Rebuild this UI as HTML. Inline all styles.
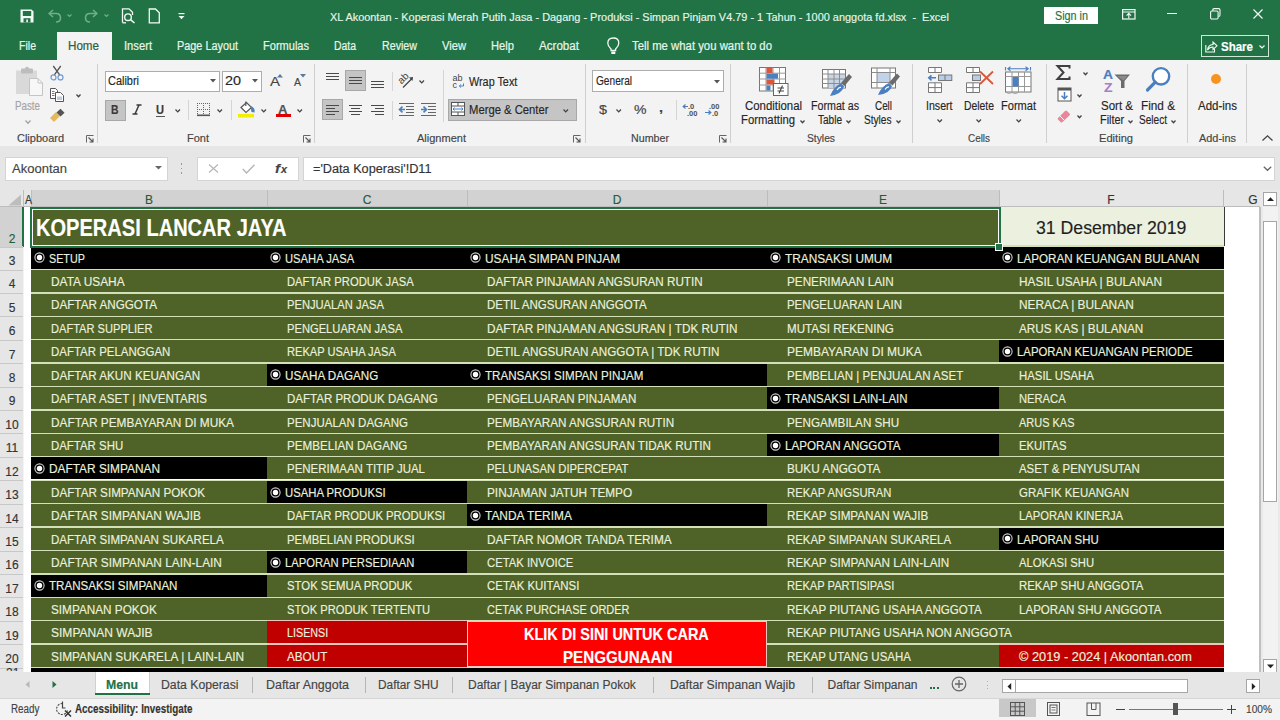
<!DOCTYPE html>
<html><head><meta charset="utf-8"><style>
html,body{margin:0;padding:0;width:1280px;height:720px;overflow:hidden;background:#f3f3f3;font-family:"Liberation Sans", sans-serif;}
.t{position:absolute;white-space:nowrap;-webkit-text-stroke-width:0.15px;}
svg{overflow:visible}
</style></head><body>
<div style="position:absolute;left:0px;top:0px;width:1280px;height:60px;background:#217346;"></div>
<div class="t" style="left:330.00px;top:12.00px;font-size:11px;line-height:11px;color:#e6f6ea;transform:scaleX(0.9932);transform-origin:0 0;white-space:pre;-webkit-text-stroke:0.15px #e6f6ea;">XL Akoontan - Koperasi Merah Putih Jasa - Dagang - Produksi - Simpan Pinjam V4.79 - 1 Tahun - 1000 anggota fd.xlsx  -  Excel</div>
<div style="position:absolute;left:1044px;top:7px;width:54px;height:17px;background:#ffffff;"></div>
<div class="t" style="left:1054.50px;top:10.00px;font-size:12px;line-height:12px;color:#217346;transform:scaleX(0.8994);transform-origin:0 0;">Sign in</div>
<div style="position:absolute;left:57px;top:32px;width:55px;height:28px;background:#f3f3f3;"></div>
<div class="t" style="left:19.00px;top:40.00px;font-size:12px;line-height:12px;color:#e6f6ea;transform:scaleX(0.8792);transform-origin:0 0;-webkit-text-stroke:0.2px #e6f6ea;">File</div>
<div class="t" style="left:68.00px;top:40.00px;font-size:12px;line-height:12px;color:#2e5e40;transform:scaleX(0.9685);transform-origin:0 0;-webkit-text-stroke:0.2px #2e5e40;">Home</div>
<div class="t" style="left:124.00px;top:40.00px;font-size:12px;line-height:12px;color:#e6f6ea;transform:scaleX(0.9330);transform-origin:0 0;-webkit-text-stroke:0.2px #e6f6ea;">Insert</div>
<div class="t" style="left:177.00px;top:40.00px;font-size:12px;line-height:12px;color:#e6f6ea;transform:scaleX(0.9052);transform-origin:0 0;-webkit-text-stroke:0.2px #e6f6ea;">Page Layout</div>
<div class="t" style="left:263.00px;top:40.00px;font-size:12px;line-height:12px;color:#e6f6ea;transform:scaleX(0.9198);transform-origin:0 0;-webkit-text-stroke:0.2px #e6f6ea;">Formulas</div>
<div class="t" style="left:334.00px;top:40.00px;font-size:12px;line-height:12px;color:#e6f6ea;transform:scaleX(0.8679);transform-origin:0 0;-webkit-text-stroke:0.2px #e6f6ea;">Data</div>
<div class="t" style="left:382.00px;top:40.00px;font-size:12px;line-height:12px;color:#e6f6ea;transform:scaleX(0.8896);transform-origin:0 0;-webkit-text-stroke:0.2px #e6f6ea;">Review</div>
<div class="t" style="left:442.00px;top:40.00px;font-size:12px;line-height:12px;color:#e6f6ea;transform:scaleX(0.9305);transform-origin:0 0;-webkit-text-stroke:0.2px #e6f6ea;">View</div>
<div class="t" style="left:491.00px;top:40.00px;font-size:12px;line-height:12px;color:#e6f6ea;transform:scaleX(0.9319);transform-origin:0 0;-webkit-text-stroke:0.2px #e6f6ea;">Help</div>
<div class="t" style="left:539.00px;top:40.00px;font-size:12px;line-height:12px;color:#e6f6ea;transform:scaleX(0.9672);transform-origin:0 0;-webkit-text-stroke:0.2px #e6f6ea;">Acrobat</div>
<div class="t" style="left:632.00px;top:40.00px;font-size:12px;line-height:12px;color:#e6f6ea;transform:scaleX(0.9454);transform-origin:0 0;-webkit-text-stroke:0.2px #e6f6ea;">Tell me what you want to do</div>
<div style="position:absolute;left:1201px;top:35px;width:66px;height:20px;border:1px solid #d0e8d8;"></div>
<div class="t" style="left:1221.00px;top:41.00px;font-size:12px;line-height:12px;color:#ffffff;font-weight:bold;transform:scaleX(0.9595);transform-origin:0 0;">Share</div>
<div style="position:absolute;left:0px;top:60px;width:1280px;height:86px;background:#f3f3f3;"></div>
<div style="position:absolute;left:0px;top:146px;width:1280px;height:46px;background:#e6e6e6;"></div>
<div style="position:absolute;left:97px;top:64px;width:1px;height:79px;background:#cfcfcf;"></div>
<div style="position:absolute;left:314px;top:64px;width:1px;height:79px;background:#cfcfcf;"></div>
<div style="position:absolute;left:585px;top:64px;width:1px;height:79px;background:#cfcfcf;"></div>
<div style="position:absolute;left:730px;top:64px;width:1px;height:79px;background:#cfcfcf;"></div>
<div style="position:absolute;left:912px;top:64px;width:1px;height:79px;background:#cfcfcf;"></div>
<div style="position:absolute;left:1046px;top:64px;width:1px;height:79px;background:#cfcfcf;"></div>
<div style="position:absolute;left:1187px;top:64px;width:1px;height:79px;background:#cfcfcf;"></div>
<div style="position:absolute;left:1246px;top:64px;width:1px;height:79px;background:#cfcfcf;"></div>
<div class="t" style="left:17.00px;top:134.00px;font-size:10px;line-height:10px;color:#444444;transform:scaleX(1.0981);transform-origin:0 0;">Clipboard</div>
<div class="t" style="left:187.00px;top:134.00px;font-size:10px;line-height:10px;color:#444444;transform:scaleX(1.0995);transform-origin:0 0;">Font</div>
<div class="t" style="left:417.00px;top:134.00px;font-size:10px;line-height:10px;color:#444444;transform:scaleX(1.1019);transform-origin:0 0;">Alignment</div>
<div class="t" style="left:631.00px;top:134.00px;font-size:10px;line-height:10px;color:#444444;transform:scaleX(1.0684);transform-origin:0 0;">Number</div>
<div class="t" style="left:807.00px;top:134.00px;font-size:10px;line-height:10px;color:#444444;transform:scaleX(1.0282);transform-origin:0 0;">Styles</div>
<div class="t" style="left:968.00px;top:134.00px;font-size:10px;line-height:10px;color:#444444;transform:scaleX(0.9898);transform-origin:0 0;">Cells</div>
<div class="t" style="left:1099.00px;top:134.00px;font-size:10px;line-height:10px;color:#444444;transform:scaleX(1.1120);transform-origin:0 0;">Editing</div>
<div class="t" style="left:1199.00px;top:134.00px;font-size:10px;line-height:10px;color:#444444;transform:scaleX(1.0912);transform-origin:0 0;">Add-ins</div>
<svg style="position:absolute;left:86px;top:135px" width="8" height="8" viewBox="0 0 8 8"><path d="M0.5,7.5 V0.5 H7.5" fill="none" stroke="#666" stroke-width="1"/><path d="M2.5,2.5 L7,7 M7,3.5 V7 H3.5" fill="none" stroke="#555" stroke-width="1.1"/></svg>
<svg style="position:absolute;left:303px;top:135px" width="8" height="8" viewBox="0 0 8 8"><path d="M0.5,7.5 V0.5 H7.5" fill="none" stroke="#666" stroke-width="1"/><path d="M2.5,2.5 L7,7 M7,3.5 V7 H3.5" fill="none" stroke="#555" stroke-width="1.1"/></svg>
<svg style="position:absolute;left:573px;top:135px" width="8" height="8" viewBox="0 0 8 8"><path d="M0.5,7.5 V0.5 H7.5" fill="none" stroke="#666" stroke-width="1"/><path d="M2.5,2.5 L7,7 M7,3.5 V7 H3.5" fill="none" stroke="#555" stroke-width="1.1"/></svg>
<svg style="position:absolute;left:719px;top:135px" width="8" height="8" viewBox="0 0 8 8"><path d="M0.5,7.5 V0.5 H7.5" fill="none" stroke="#666" stroke-width="1"/><path d="M2.5,2.5 L7,7 M7,3.5 V7 H3.5" fill="none" stroke="#555" stroke-width="1.1"/></svg>
<svg style="position:absolute;left:1262px;top:135px" width="11" height="6" viewBox="0 0 11 6"><polyline points="0.5,5.5 5.5,0.8 10.5,5.5" fill="none" stroke="#444" stroke-width="1.3"/></svg>
<svg style="position:absolute;left:14px;top:66px" width="30" height="31" viewBox="0 0 30 31">
<rect x="2" y="4.5" width="21" height="23.5" fill="#d9d9d9"/>
<rect x="7" y="2.5" width="12" height="5" rx="1" fill="#bdbdbd"/>
<circle cx="13" cy="2.8" r="2" fill="#bdbdbd"/>
<path d="M15.5,12.5 H24 L28.5,17 V29.5 H15.5 Z" fill="#f7f7f7" stroke="#c4c4c4" stroke-width="1"/>
<path d="M24,12.5 V17 H28.5" fill="none" stroke="#c4c4c4" stroke-width="1"/></svg>
<div class="t" style="left:14.90px;top:100.00px;font-size:12px;line-height:12px;color:#a3a3a3;transform:scaleX(0.8147);transform-origin:0 0;">Paste</div>
<svg style="position:absolute;left:24.5px;top:119.5px" width="6" height="3.5" viewBox="0 0 6 3.5"><polyline points="0.5,0.5 3.0,3.2 5.5,0.5" fill="none" stroke="#a3a3a3" stroke-width="1.3"/></svg>
<svg style="position:absolute;left:49px;top:65px" width="16" height="16" viewBox="0 0 16 16"><path d="M4.3,1 L10.8,10.2 M11.7,1 L5.2,10.2" stroke="#555" stroke-width="1.3" fill="none"/><circle cx="4.5" cy="12.4" r="2.5" fill="none" stroke="#6f9bd3" stroke-width="1.2"/><circle cx="11.5" cy="12.4" r="2.5" fill="none" stroke="#6f9bd3" stroke-width="1.2"/></svg>
<svg style="position:absolute;left:49px;top:87px" width="16" height="15" viewBox="0 0 16 15"><path d="M1.5,1.5 H6.5 L8.5,3.5 V11.5 H1.5 Z" fill="#fff" stroke="#555" stroke-width="1"/><path d="M3,4.5 H5.5 M3,6.5 H5.5 M3,8.5 H5.5" stroke="#666" stroke-width="0.9"/><path d="M6.5,5.5 H11.5 L14.5,8.5 V14.5 H6.5 Z" fill="#fff" stroke="#555" stroke-width="1"/><rect x="8" y="9.5" width="5" height="3.5" fill="#b9cde6"/></svg>
<svg style="position:absolute;left:76px;top:94px" width="5" height="3" viewBox="0 0 5 3"><polyline points="0.5,0.5 2.5,2.7 4.5,0.5" fill="none" stroke="#444" stroke-width="1.3"/></svg>
<svg style="position:absolute;left:49px;top:108px" width="17" height="15" viewBox="0 0 17 15">
<path d="M1,10 L7,4 L11,8 L5,14 Z" fill="#e6b85c"/>
<path d="M7.5,4.5 L11.5,0.8 L15.5,4.8 L11.5,8.5 Z" fill="#555"/></svg>
<div style="position:absolute;left:105px;top:70.5px;width:115px;height:21px;background:#ffffff;box-shadow:inset 0 0 0 1px #adadad;"></div>
<div class="t" style="left:108.00px;top:75.00px;font-size:12px;line-height:12px;color:#262626;transform:scaleX(0.9116);transform-origin:0 0;">Calibri</div>
<svg style="position:absolute;left:210px;top:79px" width="6" height="4" viewBox="0 0 6 4"><path d="M0,0 H6 L3,3.5 Z" fill="#555"/></svg>
<div style="position:absolute;left:222px;top:70.5px;width:40px;height:21px;background:#ffffff;box-shadow:inset 0 0 0 1px #adadad;"></div>
<div class="t" style="left:225.00px;top:75.00px;font-size:12px;line-height:12px;color:#262626;transform:scaleX(1.1987);transform-origin:0 0;">20</div>
<svg style="position:absolute;left:252px;top:79px" width="6" height="4" viewBox="0 0 6 4"><path d="M0,0 H6 L3,3.5 Z" fill="#555"/></svg>
<div class="t" style="left:270.00px;top:75.00px;font-size:13px;line-height:13px;color:#444444;transform:scaleX(1.1533);transform-origin:0 0;">A</div>
<svg style="position:absolute;left:277px;top:73.5px" width="6" height="4" viewBox="0 0 6 4"><path d="M0,3.5 H6 L3,0 Z" fill="#5a7a99"/></svg>
<div class="t" style="left:293.50px;top:78.00px;font-size:10px;line-height:10px;color:#444444;transform:scaleX(1.0495);transform-origin:0 0;">A</div>
<svg style="position:absolute;left:300px;top:73.5px" width="6" height="4" viewBox="0 0 6 4"><path d="M0,0 H6 L3,3.5 Z" fill="#5a7a99"/></svg>
<div style="position:absolute;left:105px;top:99.5px;width:21px;height:21px;background:#c5c5c5;box-shadow:inset 0 0 0 1px #a8a8a8;"></div>
<div class="t" style="left:111.00px;top:104.00px;font-size:12px;line-height:12px;color:#3a3a3a;font-weight:bold;transform:scaleX(0.8654);transform-origin:0 0;">B</div>
<svg style="position:absolute;left:132px;top:104px" width="10" height="11" viewBox="0 0 10 11"><path d="M4.5,1 H9.5 M0.5,10 H5.5 M7,1 L3,10" stroke="#3a3a3a" stroke-width="1.5" fill="none"/></svg>
<div class="t" style="left:156.00px;top:104.00px;font-size:12px;line-height:12px;color:#3a3a3a;font-weight:bold;transform:scaleX(0.9231);transform-origin:0 0;">U</div>
<div style="position:absolute;left:156px;top:115.5px;width:8.5px;height:1.2px;background:#555;"></div>
<svg style="position:absolute;left:174.5px;top:109px" width="5.5" height="3.2" viewBox="0 0 5.5 3.2"><polyline points="0.5,0.5 2.75,2.9000000000000004 5.0,0.5" fill="none" stroke="#444" stroke-width="1.3"/></svg>
<div style="position:absolute;left:188px;top:100px;width:1px;height:20px;background:#d5d5d5;"></div>
<svg style="position:absolute;left:197px;top:103px" width="14" height="14" viewBox="0 0 14 14"><rect x="0" y="0" width="1" height="1" fill="#666"/><rect x="6" y="0" width="1" height="1" fill="#666"/><rect x="12" y="0" width="1" height="1" fill="#666"/><rect x="0" y="2" width="1" height="1" fill="#666"/><rect x="6" y="2" width="1" height="1" fill="#666"/><rect x="12" y="2" width="1" height="1" fill="#666"/><rect x="0" y="4" width="1" height="1" fill="#666"/><rect x="6" y="4" width="1" height="1" fill="#666"/><rect x="12" y="4" width="1" height="1" fill="#666"/><rect x="0" y="6" width="1" height="1" fill="#666"/><rect x="6" y="6" width="1" height="1" fill="#666"/><rect x="12" y="6" width="1" height="1" fill="#666"/><rect x="0" y="8" width="1" height="1" fill="#666"/><rect x="6" y="8" width="1" height="1" fill="#666"/><rect x="12" y="8" width="1" height="1" fill="#666"/><rect x="0" y="10" width="1" height="1" fill="#666"/><rect x="6" y="10" width="1" height="1" fill="#666"/><rect x="12" y="10" width="1" height="1" fill="#666"/><rect x="2" y="0" width="1" height="1" fill="#666"/><rect x="4" y="0" width="1" height="1" fill="#666"/><rect x="8" y="0" width="1" height="1" fill="#666"/><rect x="10" y="0" width="1" height="1" fill="#666"/><rect x="2" y="6" width="1" height="1" fill="#666"/><rect x="4" y="6" width="1" height="1" fill="#666"/><rect x="8" y="6" width="1" height="1" fill="#666"/><rect x="10" y="6" width="1" height="1" fill="#666"/><rect x="0" y="11.5" width="13" height="1.6" fill="#555"/></svg>
<svg style="position:absolute;left:217px;top:109px" width="5.5" height="3.2" viewBox="0 0 5.5 3.2"><polyline points="0.5,0.5 2.75,2.9000000000000004 5.0,0.5" fill="none" stroke="#444" stroke-width="1.3"/></svg>
<div style="position:absolute;left:231px;top:100px;width:1px;height:20px;background:#d5d5d5;"></div>
<svg style="position:absolute;left:238px;top:101px" width="18" height="17" viewBox="0 0 18 17">
<path d="M3,6.5 L8.5,1.5 L13.5,6.5 L8,11.5 Z" fill="#fff" stroke="#555" stroke-width="1.2"/>
<path d="M7.8,0.5 V5" stroke="#555" stroke-width="1.2"/>
<path d="M12.5,5 Q17.5,6.5 16.5,11.5 L13.5,11 Z" fill="#4a7fc0"/>
<rect x="0" y="13" width="16" height="3.5" fill="#f2ee00"/></svg>
<svg style="position:absolute;left:261px;top:109px" width="5.5" height="3.2" viewBox="0 0 5.5 3.2"><polyline points="0.5,0.5 2.75,2.9000000000000004 5.0,0.5" fill="none" stroke="#444" stroke-width="1.3"/></svg>
<div class="t" style="left:278.00px;top:104.00px;font-size:12px;line-height:12px;color:#555;font-weight:bold;transform:scaleX(1.0962);transform-origin:0 0;">A</div>
<div style="position:absolute;left:275.5px;top:113.8px;width:15px;height:2.8px;background:#e00000;"></div>
<svg style="position:absolute;left:297px;top:109px" width="5.5" height="3.2" viewBox="0 0 5.5 3.2"><polyline points="0.5,0.5 2.75,2.9000000000000004 5.0,0.5" fill="none" stroke="#444" stroke-width="1.3"/></svg>
<div style="position:absolute;left:326px;top:73px;width:13px;height:1.3px;background:#4a4a4a;"></div>
<div style="position:absolute;left:326px;top:76px;width:13px;height:1.3px;background:#4a4a4a;"></div>
<div style="position:absolute;left:326px;top:79px;width:13px;height:1.3px;background:#4a4a4a;"></div>
<div style="position:absolute;left:345px;top:70.3px;width:20.5px;height:21px;background:#c5c5c5;box-shadow:inset 0 0 0 1px #a8a8a8;"></div>
<div style="position:absolute;left:349px;top:77px;width:13px;height:1.3px;background:#4a4a4a;"></div>
<div style="position:absolute;left:349px;top:80px;width:13px;height:1.3px;background:#4a4a4a;"></div>
<div style="position:absolute;left:349px;top:83px;width:13px;height:1.3px;background:#4a4a4a;"></div>
<div style="position:absolute;left:371px;top:81px;width:13px;height:1.3px;background:#4a4a4a;"></div>
<div style="position:absolute;left:371px;top:84px;width:13px;height:1.3px;background:#4a4a4a;"></div>
<div style="position:absolute;left:371px;top:87px;width:13px;height:1.3px;background:#4a4a4a;"></div>
<div style="position:absolute;left:392px;top:72px;width:1px;height:19px;background:#d5d5d5;"></div>
<svg style="position:absolute;left:398px;top:72px" width="18" height="17" viewBox="0 0 18 17">
<text x="0" y="0" transform="translate(3.5,12.5) rotate(-45)" font-family="Liberation Sans" font-size="10" fill="#444">ab</text>
<path d="M5,15.5 L14,6.5" stroke="#444" stroke-width="1.2"/><path d="M11,5.5 L15,5 L14.5,9 Z" fill="#444"/></svg>
<svg style="position:absolute;left:419px;top:80px" width="5.5" height="3.2" viewBox="0 0 5.5 3.2"><polyline points="0.5,0.5 2.75,2.9000000000000004 5.0,0.5" fill="none" stroke="#444" stroke-width="1.3"/></svg>
<div style="position:absolute;left:443px;top:70px;width:1px;height:52px;background:#d5d5d5;"></div>
<div style="position:absolute;left:322.3px;top:99.3px;width:20.5px;height:21px;background:#c5c5c5;box-shadow:inset 0 0 0 1px #a8a8a8;"></div>
<div style="position:absolute;left:326px;top:105px;width:13px;height:1.3px;background:#4a4a4a;"></div>
<div style="position:absolute;left:326px;top:108px;width:9px;height:1.3px;background:#4a4a4a;"></div>
<div style="position:absolute;left:326px;top:111px;width:13px;height:1.3px;background:#4a4a4a;"></div>
<div style="position:absolute;left:326px;top:114px;width:9px;height:1.3px;background:#4a4a4a;"></div>
<div style="position:absolute;left:349px;top:105px;width:13px;height:1.3px;background:#4a4a4a;"></div>
<div style="position:absolute;left:351px;top:108px;width:9px;height:1.3px;background:#4a4a4a;"></div>
<div style="position:absolute;left:349px;top:111px;width:13px;height:1.3px;background:#4a4a4a;"></div>
<div style="position:absolute;left:351px;top:114px;width:9px;height:1.3px;background:#4a4a4a;"></div>
<div style="position:absolute;left:371px;top:105px;width:13px;height:1.3px;background:#4a4a4a;"></div>
<div style="position:absolute;left:375px;top:108px;width:9px;height:1.3px;background:#4a4a4a;"></div>
<div style="position:absolute;left:371px;top:111px;width:13px;height:1.3px;background:#4a4a4a;"></div>
<div style="position:absolute;left:375px;top:114px;width:9px;height:1.3px;background:#4a4a4a;"></div>
<div style="position:absolute;left:392px;top:101px;width:1px;height:19px;background:#d5d5d5;"></div>
<svg style="position:absolute;left:398px;top:102px" width="17" height="14" viewBox="0 0 17 14">
<path d="M1,1.5 H16 M8,4.5 H16 M8,7.5 H16 M8,10.5 H16 M1,13.5 H16" stroke="#666" stroke-width="1"/>
<path d="M7,7.5 H2 M4.5,4.7 L1.5,7.5 L4.5,10.3" stroke="#4a7fc0" stroke-width="1.6" fill="none"/></svg>
<svg style="position:absolute;left:420px;top:102px" width="17" height="14" viewBox="0 0 17 14">
<path d="M1,1.5 H16 M8,4.5 H16 M8,7.5 H16 M8,10.5 H16 M1,13.5 H16" stroke="#666" stroke-width="1"/>
<path d="M1,7.5 H6 M3.5,4.7 L6.5,7.5 L3.5,10.3" stroke="#4a7fc0" stroke-width="1.6" fill="none"/></svg>
<svg style="position:absolute;left:452px;top:73px" width="13" height="16" viewBox="0 0 13 16">
<text x="0.5" y="8" font-family="Liberation Sans" font-size="9" fill="#444">ab</text>
<text x="0.5" y="14.5" font-family="Liberation Sans" font-size="9" fill="#444">c</text>
<path d="M11.5,10.5 V13 H7.5 M9,11.5 L7.3,13 L9,14.5" stroke="#4a7fc0" stroke-width="1" fill="none"/></svg>
<div class="t" style="left:468.60px;top:76.00px;font-size:12px;line-height:12px;color:#262626;transform:scaleX(0.9016);transform-origin:0 0;">Wrap Text</div>
<div style="position:absolute;left:448.2px;top:99.4px;width:129px;height:21.2px;background:#c5c5c5;box-shadow:inset 0 0 0 1px #a8a8a8;"></div>
<svg style="position:absolute;left:450px;top:102px" width="15" height="14" viewBox="0 0 15 14">
<rect x="1.5" y="0.5" width="13" height="13" fill="#fff" stroke="#555" stroke-width="1"/>
<path d="M1.5,4 H14.5 M1.5,10 H14.5 M8,0.5 V4 M8,10 V13.5" stroke="#555" stroke-width="1"/>
<path d="M3,7 H13 M4.5,5.5 L3,7 L4.5,8.5 M11.5,5.5 L13,7 L11.5,8.5" stroke="#4a7fc0" stroke-width="1" fill="none"/></svg>
<div class="t" style="left:468.60px;top:104.00px;font-size:12px;line-height:12px;color:#262626;transform:scaleX(0.9386);transform-origin:0 0;">Merge &amp; Center</div>
<svg style="position:absolute;left:563px;top:109px" width="5.5" height="3.2" viewBox="0 0 5.5 3.2"><polyline points="0.5,0.5 2.75,2.9000000000000004 5.0,0.5" fill="none" stroke="#444" stroke-width="1.3"/></svg>
<div style="position:absolute;left:592px;top:70.4px;width:131.5px;height:21.2px;background:#ffffff;box-shadow:inset 0 0 0 1px #adadad;"></div>
<div class="t" style="left:596.00px;top:75.00px;font-size:12px;line-height:12px;color:#262626;transform:scaleX(0.8433);transform-origin:0 0;">General</div>
<svg style="position:absolute;left:713.5px;top:79.5px" width="6" height="4" viewBox="0 0 6 4"><path d="M0,0 H6 L3,3.5 Z" fill="#555"/></svg>
<div class="t" style="left:598.50px;top:103.00px;font-size:13px;line-height:13px;color:#444444;transform:scaleX(1.1065);transform-origin:0 0;">$</div>
<svg style="position:absolute;left:616px;top:109px" width="5.5" height="3.2" viewBox="0 0 5.5 3.2"><polyline points="0.5,0.5 2.75,2.9000000000000004 5.0,0.5" fill="none" stroke="#444" stroke-width="1.3"/></svg>
<div class="t" style="left:633.50px;top:104.00px;font-size:12px;line-height:12px;color:#444444;transform:scaleX(1.1715);transform-origin:0 0;">%</div>
<div class="t" style="left:659.00px;top:101.00px;font-size:13px;line-height:13px;color:#444444;font-weight:bold;transform:scaleX(1.1075);transform-origin:0 0;">,</div>
<div style="position:absolute;left:676px;top:100px;width:1px;height:20px;background:#d5d5d5;"></div>
<svg style="position:absolute;left:682px;top:103px" width="16" height="13" viewBox="0 0 16 13">
<text x="6" y="6" font-family="Liberation Sans" font-size="7.5" font-weight="bold" fill="#505050">.0</text>
<text x="5" y="12.5" font-family="Liberation Sans" font-size="7.5" font-weight="bold" fill="#505050">.00</text>
<path d="M6,3.5 H1.5 M3.5,1.5 L1.2,3.5 L3.5,5.5" stroke="#4a7fc0" stroke-width="1.2" fill="none"/></svg>
<svg style="position:absolute;left:704px;top:103px" width="16" height="13" viewBox="0 0 16 13">
<text x="5" y="6" font-family="Liberation Sans" font-size="7.5" font-weight="bold" fill="#505050">.00</text>
<text x="8" y="12.5" font-family="Liberation Sans" font-size="7.5" font-weight="bold" fill="#505050">.0</text>
<path d="M1,9.5 H6.5 M4.5,7.5 L6.8,9.5 L4.5,11.5" stroke="#4a7fc0" stroke-width="1.2" fill="none"/></svg>
<svg style="position:absolute;left:759px;top:67px" width="30" height="30" viewBox="0 0 30 30">
<rect x="0.5" y="0.5" width="26" height="23.5" fill="#fff" stroke="#777" stroke-width="1"/>
<path d="M7,0.5 V24 M14,0.5 V24 M20.5,0.5 V24 M0.5,6.2 H26.5 M0.5,12 H26.5 M0.5,18 H26.5" stroke="#999" stroke-width="1"/>
<rect x="7.5" y="1" width="6" height="5" fill="#d9583b"/>
<rect x="7.5" y="6.7" width="11.5" height="5" fill="#4a7fc0"/>
<rect x="7.5" y="12.5" width="8" height="5" fill="#d9583b"/>
<rect x="7.5" y="18.5" width="4" height="5" fill="#4a7fc0"/>
<rect x="14.5" y="16.5" width="14.5" height="12" fill="#fff" stroke="#666" stroke-width="1"/>
<path d="M18.5,21 H25 M18.5,24 H25 M20,26.5 L23.5,18.5" stroke="#444" stroke-width="1.1"/></svg>
<div class="t" style="left:744.70px;top:100.00px;font-size:12px;line-height:12px;color:#262626;transform:scaleX(0.9494);transform-origin:0 0;">Conditional</div>
<div class="t" style="left:741.00px;top:114.00px;font-size:12px;line-height:12px;color:#262626;transform:scaleX(0.9416);transform-origin:0 0;">Formatting</div>
<svg style="position:absolute;left:799.5px;top:120px" width="5" height="3" viewBox="0 0 5 3"><polyline points="0.5,0.5 2.5,2.7 4.5,0.5" fill="none" stroke="#444" stroke-width="1.3"/></svg>
<svg style="position:absolute;left:822px;top:68px" width="31" height="30" viewBox="0 0 31 30">
<rect x="0.5" y="1.5" width="23" height="18.5" fill="#fff" stroke="#777" stroke-width="1"/>
<rect x="6" y="6" width="17" height="14" fill="#c9d6e6"/>
<path d="M6,1.5 V20 M12,1.5 V20 M17.5,1.5 V20 M0.5,6 H23.5 M0.5,11 H23.5 M0.5,15.5 H23.5" stroke="#8c8c8c" stroke-width="1"/>
<path d="M27,6 L30,9 L22.5,18 L19,15 Z" fill="#6b6b6b"/>
<path d="M19,15.5 L22,18.5 Q20,26 8,28 Q12,18 19,15.5 Z" fill="#4a7fc0"/>
<path d="M15,22 Q17,19 19,19.5" stroke="#fff" stroke-width="1.2" fill="none"/></svg>
<div class="t" style="left:811.00px;top:100.00px;font-size:12px;line-height:12px;color:#262626;transform:scaleX(0.8887);transform-origin:0 0;">Format as</div>
<div class="t" style="left:818.30px;top:114.00px;font-size:12px;line-height:12px;color:#262626;transform:scaleX(0.8366);transform-origin:0 0;">Table</div>
<svg style="position:absolute;left:846px;top:120px" width="5" height="3" viewBox="0 0 5 3"><polyline points="0.5,0.5 2.5,2.7 4.5,0.5" fill="none" stroke="#444" stroke-width="1.3"/></svg>
<svg style="position:absolute;left:871px;top:67px" width="30" height="30" viewBox="0 0 30 30">
<rect x="0.5" y="1" width="24" height="20" fill="#fff" stroke="#777" stroke-width="1"/>
<rect x="6" y="5.5" width="13" height="10" fill="#c1d3ea"/>
<path d="M6,1 V21 M19,1 V21 M0.5,5.5 H24.5 M0.5,15.5 H24.5" stroke="#8c8c8c" stroke-width="1"/>
<path d="M26,6.5 L29,9.5 L21.5,18.5 L18,15.5 Z" fill="#6b6b6b"/>
<path d="M18,16 L21,19 Q19,26.5 7,28 Q11,18.5 18,16 Z" fill="#4a7fc0"/>
<path d="M14,22.5 Q16,19.5 18,20" stroke="#fff" stroke-width="1.2" fill="none"/></svg>
<div class="t" style="left:875.00px;top:100.00px;font-size:12px;line-height:12px;color:#262626;transform:scaleX(0.8224);transform-origin:0 0;">Cell</div>
<div class="t" style="left:864.00px;top:114.00px;font-size:12px;line-height:12px;color:#262626;transform:scaleX(0.8416);transform-origin:0 0;">Styles</div>
<svg style="position:absolute;left:895.5px;top:120px" width="5" height="3" viewBox="0 0 5 3"><polyline points="0.5,0.5 2.5,2.7 4.5,0.5" fill="none" stroke="#444" stroke-width="1.3"/></svg>
<svg style="position:absolute;left:926px;top:66px" width="28" height="28" viewBox="0 0 28 28">
<path d="M2.5,1.5 H15.5 V6.5 H2.5 Z M9,1.5 V6.5" fill="#fff" stroke="#777" stroke-width="1"/>
<rect x="12.5" y="9" width="13.3" height="5.5" fill="#b9cde6" stroke="#777" stroke-width="1"/>
<path d="M19,9 V14.5" stroke="#777" stroke-width="1"/>
<path d="M10,11.8 H3 M5.5,9.3 L2.8,11.8 L5.5,14.3" stroke="#4a7fc0" stroke-width="1.6" fill="none"/>
<path d="M2.5,16.8 H15.5 V26.5 H2.5 Z M9,16.8 V26.5 M2.5,21.6 H15.5" fill="#fff" stroke="#777" stroke-width="1"/></svg>
<div class="t" style="left:926.00px;top:100.00px;font-size:12px;line-height:12px;color:#262626;transform:scaleX(0.8830);transform-origin:0 0;">Insert</div>
<svg style="position:absolute;left:937px;top:119px" width="5.5" height="3.2" viewBox="0 0 5.5 3.2"><polyline points="0.5,0.5 2.75,2.9000000000000004 5.0,0.5" fill="none" stroke="#444" stroke-width="1.3"/></svg>
<svg style="position:absolute;left:964px;top:66px" width="32" height="28" viewBox="0 0 32 28">
<path d="M2.5,1.5 H15.5 V6.5 H2.5 Z M9,1.5 V6.5" fill="#fff" stroke="#777" stroke-width="1"/>
<rect x="8.5" y="9" width="8" height="5.5" fill="#b9cde6" stroke="#777" stroke-width="1"/>
<path d="M2.5,16.8 H15.5 V26.5 H2.5 Z M9,16.8 V26.5 M2.5,21.6 H15.5" fill="#fff" stroke="#777" stroke-width="1"/>
<path d="M16,5.5 L29,18 M29,5.5 L16,18" stroke="#d9583b" stroke-width="1.8"/></svg>
<div class="t" style="left:964.00px;top:100.00px;font-size:12px;line-height:12px;color:#262626;transform:scaleX(0.8649);transform-origin:0 0;">Delete</div>
<svg style="position:absolute;left:1015.5px;top:119px" width="5.5" height="3.2" viewBox="0 0 5.5 3.2"><polyline points="0.5,0.5 2.75,2.9000000000000004 5.0,0.5" fill="none" stroke="#444" stroke-width="1.3"/></svg>
<svg style="position:absolute;left:976px;top:119px" width="5.5" height="3.2" viewBox="0 0 5.5 3.2"><polyline points="0.5,0.5 2.75,2.9000000000000004 5.0,0.5" fill="none" stroke="#444" stroke-width="1.3"/></svg>
<svg style="position:absolute;left:1004px;top:66px" width="30" height="29" viewBox="0 0 30 29">
<path d="M1.5,1 V4.5 M26.5,1 V4.5 M4,2.8 H24 M6.5,0.8 L3.8,2.8 L6.5,4.8 M21.5,0.8 L24.2,2.8 L21.5,4.8" stroke="#4a7fc0" stroke-width="1.1" fill="none"/>
<rect x="1.5" y="6" width="25.5" height="20" fill="#fff" stroke="#777" stroke-width="1"/>
<path d="M8,6 V26 M14.5,6 V26 M20.5,6 V26 M1.5,10.5 H27 M1.5,20.5 H27" stroke="#999" stroke-width="1"/>
<rect x="8.5" y="11" width="6" height="9.5" fill="#4a7fc0"/>
<path d="M1.5,26 Q4,28.5 8,26.5 Q11,28.5 14.5,26.5" fill="none" stroke="#999" stroke-width="1"/></svg>
<div class="t" style="left:1001.00px;top:100.00px;font-size:12px;line-height:12px;color:#262626;transform:scaleX(0.9210);transform-origin:0 0;">Format</div>
<svg style="position:absolute;left:1056px;top:65px" width="15" height="15" viewBox="0 0 15 15"><path d="M13.5,3.5 V1 H1.5 L7.5,7.5 L1.5,14 H13.5 V11.5" fill="none" stroke="#404040" stroke-width="2" stroke-linejoin="miter"/></svg>
<svg style="position:absolute;left:1082.5px;top:72px" width="5" height="3" viewBox="0 0 5 3"><polyline points="0.5,0.5 2.5,2.7 4.5,0.5" fill="none" stroke="#444" stroke-width="1.3"/></svg>
<svg style="position:absolute;left:1057px;top:87px" width="15" height="15" viewBox="0 0 15 15">
<rect x="1" y="1" width="13" height="13" fill="#fff" stroke="#555" stroke-width="1"/>
<rect x="1" y="1" width="13" height="2.5" fill="#555"/>
<path d="M7.5,5 V11.5 M4.5,8.8 L7.5,11.8 L10.5,8.8" stroke="#4a7fc0" stroke-width="1.5" fill="none"/></svg>
<svg style="position:absolute;left:1077px;top:94px" width="5" height="3" viewBox="0 0 5 3"><polyline points="0.5,0.5 2.5,2.7 4.5,0.5" fill="none" stroke="#444" stroke-width="1.3"/></svg>
<svg style="position:absolute;left:1057px;top:109px" width="14" height="13" viewBox="0 0 14 13"><path d="M1,9 L8,2 Q9,1 10,2 L12.5,4.5 Q13.5,5.5 12.5,6.5 L5.5,13 Q4.5,14 3.5,13 L1,10.5 Q0,9.5 1,9 Z" fill="#e8879b"/><path d="M3,7 L7,11" stroke="#f3f3f3" stroke-width="1"/></svg>
<svg style="position:absolute;left:1077px;top:115px" width="5" height="3" viewBox="0 0 5 3"><polyline points="0.5,0.5 2.5,2.7 4.5,0.5" fill="none" stroke="#444" stroke-width="1.3"/></svg>
<div class="t" style="left:1103.00px;top:69.00px;font-size:12px;line-height:12px;color:#4a7fc0;font-weight:bold;transform:scaleX(1.1539);transform-origin:0 0;">A</div>
<div class="t" style="left:1104.00px;top:82.00px;font-size:12px;line-height:12px;color:#a87dc6;font-weight:bold;transform:scaleX(1.1596);transform-origin:0 0;">Z</div>
<svg style="position:absolute;left:1114px;top:74px" width="17" height="15" viewBox="0 0 17 15"><path d="M0.5,0.5 H16 L10.5,7 V14 H7 V7 Z" fill="#6b6b6b"/><path d="M3,2 H13.5 L9.5,6.5" fill="#8a8a8a"/></svg>
<div class="t" style="left:1101.00px;top:100.00px;font-size:12px;line-height:12px;color:#262626;transform:scaleX(0.9596);transform-origin:0 0;">Sort &amp;</div>
<div class="t" style="left:1099.60px;top:114.00px;font-size:12px;line-height:12px;color:#262626;transform:scaleX(0.9075);transform-origin:0 0;">Filter</div>
<svg style="position:absolute;left:1127.5px;top:120px" width="5" height="3" viewBox="0 0 5 3"><polyline points="0.5,0.5 2.5,2.7 4.5,0.5" fill="none" stroke="#444" stroke-width="1.3"/></svg>
<svg style="position:absolute;left:1144px;top:64px" width="30" height="30" viewBox="0 0 30 30"><circle cx="17" cy="12.3" r="8.2" fill="#fff" stroke="#4a7fc0" stroke-width="2.4"/><path d="M11.3,18.2 L3.5,26" stroke="#4a7fc0" stroke-width="3.2" stroke-linecap="round"/></svg>
<div class="t" style="left:1141.00px;top:100.00px;font-size:12px;line-height:12px;color:#262626;transform:scaleX(0.9803);transform-origin:0 0;">Find &amp;</div>
<div class="t" style="left:1139.00px;top:114.00px;font-size:12px;line-height:12px;color:#262626;transform:scaleX(0.8395);transform-origin:0 0;">Select</div>
<svg style="position:absolute;left:1170.5px;top:120px" width="5" height="3" viewBox="0 0 5 3"><polyline points="0.5,0.5 2.5,2.7 4.5,0.5" fill="none" stroke="#444" stroke-width="1.3"/></svg>
<svg style="position:absolute;left:1210px;top:73px" width="12" height="12" viewBox="0 0 12 12"><circle cx="6" cy="6" r="5" fill="#f7931e"/></svg>
<div class="t" style="left:1198.00px;top:100.00px;font-size:12px;line-height:12px;color:#262626;transform:scaleX(0.9585);transform-origin:0 0;">Add-ins</div>
<div style="position:absolute;left:5px;top:157px;width:162.5px;height:24px;background:#ffffff;box-shadow:0 0 0 1px #d4d4d4 inset;"></div>
<div class="t" style="left:12.00px;top:163.00px;font-size:12px;line-height:12px;color:#444444;transform:scaleX(1.0847);transform-origin:0 0;">Akoontan</div>
<div style="position:absolute;left:196.5px;top:157px;width:102px;height:24px;background:#ffffff;box-shadow:0 0 0 1px #d4d4d4 inset;"></div>
<div style="position:absolute;left:302.5px;top:157px;width:972.5px;height:24px;background:#ffffff;box-shadow:0 0 0 1px #d4d4d4 inset;"></div>
<div class="t" style="left:312.50px;top:163.00px;font-size:12px;line-height:12px;color:#333333;transform:scaleX(1.0572);transform-origin:0 0;">=&#x27;Data Koperasi&#x27;!D11</div>
<div style="position:absolute;left:0px;top:207px;width:23px;height:465px;background:#e6e6e6;"></div>
<div style="position:absolute;left:0px;top:207px;width:23px;height:39.5px;background:#d2d2d2;"></div>
<div style="position:absolute;left:24px;top:207px;width:1236px;height:465px;background:#ffffff;"></div>
<svg style="position:absolute;left:20px;top:9px" width="14" height="14" viewBox="0 0 14 14">
<path d="M0.5,0.5 H11.5 L13.5,2.5 V13.5 H0.5 Z" fill="#f2fbf5"/>
<rect x="2.8" y="2" width="8.4" height="5" fill="#217346"/>
<rect x="3.5" y="9.2" width="7" height="4.3" fill="#217346"/>
<rect x="6.3" y="10.5" width="1.6" height="2.6" fill="#f2fbf5"/></svg>
<svg style="position:absolute;left:47px;top:8px" width="16" height="15" viewBox="0 0 16 15"><path d="M2.5,5.5 H9 Q13.5,5.5 13.5,10 Q13.5,14 9,14" fill="none" stroke="#6fae88" stroke-width="1.6"/><path d="M6,2 L2.2,5.5 L6,9" fill="none" stroke="#6fae88" stroke-width="1.6"/></svg>
<svg style="position:absolute;left:67px;top:14px" width="5" height="3" viewBox="0 0 5 3"><polyline points="0.5,0.5 2.5,2.5 4.5,0.5" fill="none" stroke="#6fae88" stroke-width="1.1"/></svg>
<svg style="position:absolute;left:83px;top:8px" width="16" height="15" viewBox="0 0 16 15"><path d="M13.5,5.5 H7 Q2.5,5.5 2.5,10 Q2.5,14 7,14" fill="none" stroke="#6fae88" stroke-width="1.6"/><path d="M10,2 L13.8,5.5 L10,9" fill="none" stroke="#6fae88" stroke-width="1.6"/></svg>
<svg style="position:absolute;left:104px;top:14px" width="5" height="3" viewBox="0 0 5 3"><polyline points="0.5,0.5 2.5,2.5 4.5,0.5" fill="none" stroke="#6fae88" stroke-width="1.1"/></svg>
<svg style="position:absolute;left:121px;top:8px" width="15" height="16" viewBox="0 0 15 16">
<path d="M1.5,14.5 V0.8 H8 L11.5,4.3 V7" fill="none" stroke="#f2fbf5" stroke-width="1.3"/>
<path d="M1.5,14.8 H5" stroke="#f2fbf5" stroke-width="1.3"/>
<circle cx="7" cy="9.2" r="3.3" fill="none" stroke="#f2fbf5" stroke-width="1.4"/>
<path d="M9.5,11.7 L13.5,15" stroke="#f2fbf5" stroke-width="1.6"/></svg>
<svg style="position:absolute;left:148px;top:8px" width="13" height="16" viewBox="0 0 13 16"><path d="M1.3,1 H7.5 L11.3,4.8 V14.8 H1.3 Z" fill="none" stroke="#f2fbf5" stroke-width="1.3"/></svg>
<svg style="position:absolute;left:178px;top:12px" width="7" height="8" viewBox="0 0 7 8"><rect x="0.5" y="1" width="6" height="1.2" fill="#f2fbf5"/><path d="M0.5,4 H6.5 L3.5,7.2 Z" fill="#f2fbf5"/></svg>
<svg style="position:absolute;left:607px;top:37px" width="13" height="18" viewBox="0 0 13 18">
<path d="M4,12 Q0.8,9 0.8,6.3 Q0.8,1 6.3,1 Q11.8,1 11.8,6.3 Q11.8,9 8.6,12 V13.5 H4 Z" fill="none" stroke="#f2fbf5" stroke-width="1.3"/>
<rect x="4.3" y="14.5" width="4" height="2.5" fill="#f2fbf5"/></svg>
<svg style="position:absolute;left:1122px;top:9px" width="14" height="11" viewBox="0 0 14 11">
<rect x="0.6" y="0.6" width="12.4" height="9.4" fill="none" stroke="#f2fbf5" stroke-width="1.2"/>
<path d="M0.6,3 H13" stroke="#f2fbf5" stroke-width="1"/>
<path d="M6.8,9.5 V4.5 M4.6,6.6 L6.8,4.4 L9,6.6" fill="none" stroke="#f2fbf5" stroke-width="1.1"/></svg>
<div style="position:absolute;left:1167px;top:13px;width:10px;height:1.2px;background:#f2fbf5;"></div>
<svg style="position:absolute;left:1210px;top:8px" width="11" height="12" viewBox="0 0 11 12"><rect x="0.6" y="3" width="7.5" height="8" rx="1.2" fill="none" stroke="#f2fbf5" stroke-width="1.1"/><path d="M2.8,2.8 V2 Q2.8,0.6 4.2,0.6 H8.6 Q10,0.6 10,2 V7 Q10,8.5 8.5,8.5" fill="none" stroke="#f2fbf5" stroke-width="1.1"/></svg>
<svg style="position:absolute;left:1253px;top:9px" width="10" height="10" viewBox="0 0 10 10"><path d="M0.5,0.5 L9.5,9.5 M9.5,0.5 L0.5,9.5" stroke="#f2fbf5" stroke-width="1.2"/></svg>
<svg style="position:absolute;left:1205px;top:40px" width="13" height="13" viewBox="0 0 13 13">
<path d="M0.8,5 V12 H9.5 V9" fill="none" stroke="#f2fbf5" stroke-width="1.1"/>
<path d="M2.5,10 Q3,5 8,4.5 V2 L12,5.8 L8,9.5 V7 Q4.5,7 2.5,10 Z" fill="none" stroke="#f2fbf5" stroke-width="1.1"/></svg>
<svg style="position:absolute;left:1259px;top:45px" width="6" height="4" viewBox="0 0 6 4"><polyline points="0.5,0.5 3,3 5.5,0.5" fill="none" stroke="#f2fbf5" stroke-width="1.2"/></svg>
<svg style="position:absolute;left:155px;top:166px" width="7" height="4" viewBox="0 0 7 4"><path d="M0,0 H7 L3.5,3.5 Z" fill="#666"/></svg>
<div style="position:absolute;left:180.8px;top:163.2px;width:1.6px;height:1.6px;background:#999;"></div>
<div style="position:absolute;left:180.8px;top:167.7px;width:1.6px;height:1.6px;background:#999;"></div>
<div style="position:absolute;left:180.8px;top:172.2px;width:1.6px;height:1.6px;background:#999;"></div>
<svg style="position:absolute;left:208px;top:164px" width="11" height="9" viewBox="0 0 11 9"><path d="M1,0.5 L10,8.5 M10,0.5 L1,8.5" stroke="#b5b5b5" stroke-width="1.2"/></svg>
<svg style="position:absolute;left:242px;top:164px" width="13" height="10" viewBox="0 0 13 10"><path d="M0.8,5 L4.5,9 L12.5,0.8" fill="none" stroke="#b5b5b5" stroke-width="1.4"/></svg>
<div class="t" style="left:274.50px;top:162.00px;font-size:13px;line-height:13px;color:#444;font-weight:bold;transform:scaleX(1.1550);transform-origin:0 0;font-style:italic;font-family:"Liberation Serif";">f</div>
<div class="t" style="left:280.50px;top:165.00px;font-size:10px;line-height:10px;color:#444;font-weight:bold;transform:scaleX(1.0788);transform-origin:0 0;font-style:italic;font-family:"Liberation Serif";">x</div>
<svg style="position:absolute;left:1263px;top:166px" width="9" height="5" viewBox="0 0 9 5"><polyline points="0.8,0.8 4.5,4.3 8.2,0.8" fill="none" stroke="#666" stroke-width="1.3"/></svg>
<div style="position:absolute;left:0px;top:190px;width:1260px;height:17px;background:#e6e6e6;"></div>
<div style="position:absolute;left:31px;top:190px;width:969px;height:17px;background:#d2d2d2;"></div>
<svg style="position:absolute;left:5px;top:194px" width="17" height="12" viewBox="0 0 17 12"><path d="M16,0.5 V11.5 H3.5 Z" fill="#bdbdbd"/></svg>
<div style="position:absolute;left:23px;top:190px;width:1px;height:17px;background:#bdbdbd;"></div>
<div style="position:absolute;left:31px;top:190px;width:1px;height:17px;background:#bdbdbd;"></div>
<div style="position:absolute;left:267px;top:190px;width:1px;height:17px;background:#bdbdbd;"></div>
<div style="position:absolute;left:467px;top:190px;width:1px;height:17px;background:#bdbdbd;"></div>
<div style="position:absolute;left:767px;top:190px;width:1px;height:17px;background:#bdbdbd;"></div>
<div style="position:absolute;left:999px;top:190px;width:1px;height:17px;background:#bdbdbd;"></div>
<div style="position:absolute;left:1223px;top:190px;width:1px;height:17px;background:#bdbdbd;"></div>
<div style="position:absolute;left:0px;top:206px;width:1260px;height:1px;background:#bdbdbd;"></div>
<div style="position:absolute;left:31px;top:206.5px;width:969px;height:2px;background:#217346;"></div>
<div class="t" style="left:145.00px;top:194.00px;font-size:12px;line-height:12px;color:#1f5c3a;">B</div>
<div class="t" style="left:362.67px;top:194.00px;font-size:12px;line-height:12px;color:#1f5c3a;">C</div>
<div class="t" style="left:612.67px;top:194.00px;font-size:12px;line-height:12px;color:#1f5c3a;">D</div>
<div class="t" style="left:879.00px;top:194.00px;font-size:12px;line-height:12px;color:#1f5c3a;">E</div>
<div class="t" style="left:1107.33px;top:194.00px;font-size:12px;line-height:12px;color:#333;">F</div>
<div class="t" style="left:1248.33px;top:194.00px;font-size:12px;line-height:12px;color:#333;">G</div>
<div class="t" style="left:24.50px;top:194.00px;font-size:12px;line-height:12px;color:#333;transform:scaleX(0.8746);transform-origin:0 0;">A</div>
<div style="position:absolute;left:31px;top:207px;width:968px;height:39px;background:#4f6228;"></div>
<div style="position:absolute;left:999px;top:207px;width:225px;height:39px;background:#ebf1de;"></div>
<div style="position:absolute;left:1223.5px;top:207px;width:1px;height:39px;background:#3a3a3a;"></div>
<div class="t" style="left:36.20px;top:217.00px;font-size:23px;line-height:23px;color:#ffffff;font-weight:bold;transform:scaleX(0.8724);transform-origin:0 0;">KOPERASI LANCAR JAYA</div>
<div class="t" style="left:1036.00px;top:220.00px;font-size:17.5px;line-height:17.5px;color:#1f1f1f;transform:scaleX(1.0098);transform-origin:0 0;">31 Desember 2019</div>
<div style="position:absolute;left:31px;top:245.3px;width:1193px;height:23.420000000000016px;background:#d4e0b8;"></div>
<div style="position:absolute;left:31px;top:246.70000000000002px;width:236px;height:22.020000000000017px;background:#000000;"></div>
<div style="position:absolute;left:267px;top:246.70000000000002px;width:200px;height:22.020000000000017px;background:#000000;"></div>
<div style="position:absolute;left:467px;top:246.70000000000002px;width:300px;height:22.020000000000017px;background:#000000;"></div>
<div style="position:absolute;left:767px;top:246.70000000000002px;width:232px;height:22.020000000000017px;background:#000000;"></div>
<div style="position:absolute;left:999px;top:246.70000000000002px;width:225px;height:22.020000000000017px;background:#000000;"></div>
<div style="position:absolute;left:31px;top:268.72px;width:1193px;height:23.41999999999996px;background:#d4e0b8;"></div>
<div style="position:absolute;left:31px;top:270.12px;width:236px;height:22.01999999999996px;background:#4f6228;"></div>
<div style="position:absolute;left:267px;top:270.12px;width:200px;height:22.01999999999996px;background:#4f6228;"></div>
<div style="position:absolute;left:467px;top:270.12px;width:300px;height:22.01999999999996px;background:#4f6228;"></div>
<div style="position:absolute;left:767px;top:270.12px;width:232px;height:22.01999999999996px;background:#4f6228;"></div>
<div style="position:absolute;left:999px;top:270.12px;width:225px;height:22.01999999999996px;background:#4f6228;"></div>
<div style="position:absolute;left:31px;top:292.14px;width:1193px;height:23.420000000000016px;background:#d4e0b8;"></div>
<div style="position:absolute;left:31px;top:293.53999999999996px;width:236px;height:22.020000000000017px;background:#4f6228;"></div>
<div style="position:absolute;left:267px;top:293.53999999999996px;width:200px;height:22.020000000000017px;background:#4f6228;"></div>
<div style="position:absolute;left:467px;top:293.53999999999996px;width:300px;height:22.020000000000017px;background:#4f6228;"></div>
<div style="position:absolute;left:767px;top:293.53999999999996px;width:232px;height:22.020000000000017px;background:#4f6228;"></div>
<div style="position:absolute;left:999px;top:293.53999999999996px;width:225px;height:22.020000000000017px;background:#4f6228;"></div>
<div style="position:absolute;left:31px;top:315.56px;width:1193px;height:23.420000000000016px;background:#d4e0b8;"></div>
<div style="position:absolute;left:31px;top:316.96px;width:236px;height:22.020000000000017px;background:#4f6228;"></div>
<div style="position:absolute;left:267px;top:316.96px;width:200px;height:22.020000000000017px;background:#4f6228;"></div>
<div style="position:absolute;left:467px;top:316.96px;width:300px;height:22.020000000000017px;background:#4f6228;"></div>
<div style="position:absolute;left:767px;top:316.96px;width:232px;height:22.020000000000017px;background:#4f6228;"></div>
<div style="position:absolute;left:999px;top:316.96px;width:225px;height:22.020000000000017px;background:#4f6228;"></div>
<div style="position:absolute;left:31px;top:338.98px;width:1193px;height:23.420000000000016px;background:#d4e0b8;"></div>
<div style="position:absolute;left:31px;top:340.38px;width:236px;height:22.020000000000017px;background:#4f6228;"></div>
<div style="position:absolute;left:267px;top:340.38px;width:200px;height:22.020000000000017px;background:#4f6228;"></div>
<div style="position:absolute;left:467px;top:340.38px;width:300px;height:22.020000000000017px;background:#4f6228;"></div>
<div style="position:absolute;left:767px;top:340.38px;width:232px;height:22.020000000000017px;background:#4f6228;"></div>
<div style="position:absolute;left:999px;top:340.38px;width:225px;height:22.020000000000017px;background:#000000;"></div>
<div style="position:absolute;left:31px;top:362.40000000000003px;width:1193px;height:23.420000000000016px;background:#d4e0b8;"></div>
<div style="position:absolute;left:31px;top:363.8px;width:236px;height:22.020000000000017px;background:#4f6228;"></div>
<div style="position:absolute;left:267px;top:363.8px;width:200px;height:22.020000000000017px;background:#000000;"></div>
<div style="position:absolute;left:467px;top:363.8px;width:300px;height:22.020000000000017px;background:#000000;"></div>
<div style="position:absolute;left:767px;top:363.8px;width:232px;height:22.020000000000017px;background:#4f6228;"></div>
<div style="position:absolute;left:999px;top:363.8px;width:225px;height:22.020000000000017px;background:#4f6228;"></div>
<div style="position:absolute;left:31px;top:385.82000000000005px;width:1193px;height:23.41999999999996px;background:#d4e0b8;"></div>
<div style="position:absolute;left:31px;top:387.22px;width:236px;height:22.01999999999996px;background:#4f6228;"></div>
<div style="position:absolute;left:267px;top:387.22px;width:200px;height:22.01999999999996px;background:#4f6228;"></div>
<div style="position:absolute;left:467px;top:387.22px;width:300px;height:22.01999999999996px;background:#4f6228;"></div>
<div style="position:absolute;left:767px;top:387.22px;width:232px;height:22.01999999999996px;background:#000000;"></div>
<div style="position:absolute;left:999px;top:387.22px;width:225px;height:22.01999999999996px;background:#4f6228;"></div>
<div style="position:absolute;left:31px;top:409.24px;width:1193px;height:23.420000000000016px;background:#d4e0b8;"></div>
<div style="position:absolute;left:31px;top:410.64px;width:236px;height:22.020000000000017px;background:#4f6228;"></div>
<div style="position:absolute;left:267px;top:410.64px;width:200px;height:22.020000000000017px;background:#4f6228;"></div>
<div style="position:absolute;left:467px;top:410.64px;width:300px;height:22.020000000000017px;background:#4f6228;"></div>
<div style="position:absolute;left:767px;top:410.64px;width:232px;height:22.020000000000017px;background:#4f6228;"></div>
<div style="position:absolute;left:999px;top:410.64px;width:225px;height:22.020000000000017px;background:#4f6228;"></div>
<div style="position:absolute;left:31px;top:432.66px;width:1193px;height:23.420000000000016px;background:#d4e0b8;"></div>
<div style="position:absolute;left:31px;top:434.06px;width:236px;height:22.020000000000017px;background:#4f6228;"></div>
<div style="position:absolute;left:267px;top:434.06px;width:200px;height:22.020000000000017px;background:#4f6228;"></div>
<div style="position:absolute;left:467px;top:434.06px;width:300px;height:22.020000000000017px;background:#4f6228;"></div>
<div style="position:absolute;left:767px;top:434.06px;width:232px;height:22.020000000000017px;background:#000000;"></div>
<div style="position:absolute;left:999px;top:434.06px;width:225px;height:22.020000000000017px;background:#4f6228;"></div>
<div style="position:absolute;left:31px;top:456.08000000000004px;width:1193px;height:23.41999999999996px;background:#d4e0b8;"></div>
<div style="position:absolute;left:31px;top:457.48px;width:236px;height:22.01999999999996px;background:#000000;"></div>
<div style="position:absolute;left:267px;top:457.48px;width:200px;height:22.01999999999996px;background:#4f6228;"></div>
<div style="position:absolute;left:467px;top:457.48px;width:300px;height:22.01999999999996px;background:#4f6228;"></div>
<div style="position:absolute;left:767px;top:457.48px;width:232px;height:22.01999999999996px;background:#4f6228;"></div>
<div style="position:absolute;left:999px;top:457.48px;width:225px;height:22.01999999999996px;background:#4f6228;"></div>
<div style="position:absolute;left:31px;top:479.5px;width:1193px;height:23.420000000000016px;background:#d4e0b8;"></div>
<div style="position:absolute;left:31px;top:480.9px;width:236px;height:22.020000000000017px;background:#4f6228;"></div>
<div style="position:absolute;left:267px;top:480.9px;width:200px;height:22.020000000000017px;background:#000000;"></div>
<div style="position:absolute;left:467px;top:480.9px;width:300px;height:22.020000000000017px;background:#4f6228;"></div>
<div style="position:absolute;left:767px;top:480.9px;width:232px;height:22.020000000000017px;background:#4f6228;"></div>
<div style="position:absolute;left:999px;top:480.9px;width:225px;height:22.020000000000017px;background:#4f6228;"></div>
<div style="position:absolute;left:31px;top:502.92px;width:1193px;height:23.420000000000016px;background:#d4e0b8;"></div>
<div style="position:absolute;left:31px;top:504.32px;width:236px;height:22.020000000000017px;background:#4f6228;"></div>
<div style="position:absolute;left:267px;top:504.32px;width:200px;height:22.020000000000017px;background:#4f6228;"></div>
<div style="position:absolute;left:467px;top:504.32px;width:300px;height:22.020000000000017px;background:#000000;"></div>
<div style="position:absolute;left:767px;top:504.32px;width:232px;height:22.020000000000017px;background:#4f6228;"></div>
<div style="position:absolute;left:999px;top:504.32px;width:225px;height:22.020000000000017px;background:#4f6228;"></div>
<div style="position:absolute;left:31px;top:526.34px;width:1193px;height:23.41999999999996px;background:#d4e0b8;"></div>
<div style="position:absolute;left:31px;top:527.74px;width:236px;height:22.01999999999996px;background:#4f6228;"></div>
<div style="position:absolute;left:267px;top:527.74px;width:200px;height:22.01999999999996px;background:#4f6228;"></div>
<div style="position:absolute;left:467px;top:527.74px;width:300px;height:22.01999999999996px;background:#4f6228;"></div>
<div style="position:absolute;left:767px;top:527.74px;width:232px;height:22.01999999999996px;background:#4f6228;"></div>
<div style="position:absolute;left:999px;top:527.74px;width:225px;height:22.01999999999996px;background:#000000;"></div>
<div style="position:absolute;left:31px;top:549.76px;width:1193px;height:23.420000000000073px;background:#d4e0b8;"></div>
<div style="position:absolute;left:31px;top:551.16px;width:236px;height:22.020000000000074px;background:#4f6228;"></div>
<div style="position:absolute;left:267px;top:551.16px;width:200px;height:22.020000000000074px;background:#000000;"></div>
<div style="position:absolute;left:467px;top:551.16px;width:300px;height:22.020000000000074px;background:#4f6228;"></div>
<div style="position:absolute;left:767px;top:551.16px;width:232px;height:22.020000000000074px;background:#4f6228;"></div>
<div style="position:absolute;left:999px;top:551.16px;width:225px;height:22.020000000000074px;background:#4f6228;"></div>
<div style="position:absolute;left:31px;top:573.1800000000001px;width:1193px;height:23.41999999999996px;background:#d4e0b8;"></div>
<div style="position:absolute;left:31px;top:574.58px;width:236px;height:22.01999999999996px;background:#000000;"></div>
<div style="position:absolute;left:267px;top:574.58px;width:200px;height:22.01999999999996px;background:#4f6228;"></div>
<div style="position:absolute;left:467px;top:574.58px;width:300px;height:22.01999999999996px;background:#4f6228;"></div>
<div style="position:absolute;left:767px;top:574.58px;width:232px;height:22.01999999999996px;background:#4f6228;"></div>
<div style="position:absolute;left:999px;top:574.58px;width:225px;height:22.01999999999996px;background:#4f6228;"></div>
<div style="position:absolute;left:31px;top:596.6px;width:1193px;height:23.41999999999996px;background:#d4e0b8;"></div>
<div style="position:absolute;left:31px;top:598.0px;width:236px;height:22.01999999999996px;background:#4f6228;"></div>
<div style="position:absolute;left:267px;top:598.0px;width:200px;height:22.01999999999996px;background:#4f6228;"></div>
<div style="position:absolute;left:467px;top:598.0px;width:300px;height:22.01999999999996px;background:#4f6228;"></div>
<div style="position:absolute;left:767px;top:598.0px;width:232px;height:22.01999999999996px;background:#4f6228;"></div>
<div style="position:absolute;left:999px;top:598.0px;width:225px;height:22.01999999999996px;background:#4f6228;"></div>
<div style="position:absolute;left:31px;top:620.02px;width:1193px;height:23.420000000000073px;background:#d4e0b8;"></div>
<div style="position:absolute;left:31px;top:621.42px;width:236px;height:22.020000000000074px;background:#4f6228;"></div>
<div style="position:absolute;left:267px;top:621.42px;width:200px;height:22.020000000000074px;background:#c00000;"></div>
<div style="position:absolute;left:467px;top:621.42px;width:300px;height:22.020000000000074px;background:#4f6228;"></div>
<div style="position:absolute;left:767px;top:621.42px;width:232px;height:22.020000000000074px;background:#4f6228;"></div>
<div style="position:absolute;left:999px;top:621.42px;width:225px;height:22.020000000000074px;background:#4f6228;"></div>
<div style="position:absolute;left:31px;top:643.44px;width:1193px;height:23.420000000000073px;background:#d4e0b8;"></div>
<div style="position:absolute;left:31px;top:644.84px;width:236px;height:22.020000000000074px;background:#4f6228;"></div>
<div style="position:absolute;left:267px;top:644.84px;width:200px;height:22.020000000000074px;background:#c00000;"></div>
<div style="position:absolute;left:467px;top:644.84px;width:300px;height:22.020000000000074px;background:#4f6228;"></div>
<div style="position:absolute;left:767px;top:644.84px;width:232px;height:22.020000000000074px;background:#4f6228;"></div>
<div style="position:absolute;left:999px;top:644.84px;width:225px;height:22.020000000000074px;background:#c00000;"></div>
<div style="position:absolute;left:467px;top:621.02px;width:300px;height:45.840000000000146px;background:#f2c8c0;"></div>
<div style="position:absolute;left:468px;top:621.52px;width:298px;height:44.840000000000146px;background:#ff0000;"></div>
<div style="position:absolute;left:31px;top:666.8600000000001px;width:1193px;height:1.4px;background:#d4e0b8;"></div>
<div style="position:absolute;left:31px;top:668.2600000000001px;width:1193px;height:3.7399999999998728px;background:#000000;"></div>
<div style="position:absolute;left:267px;top:620.02px;width:200px;height:1.4px;background:#efc4bc;"></div>
<div style="position:absolute;left:267px;top:643.44px;width:200px;height:1.4px;background:#efc4bc;"></div>
<div style="position:absolute;left:267px;top:643.44px;width:200px;height:1.4px;background:#efc4bc;"></div>
<div style="position:absolute;left:267px;top:666.8600000000001px;width:200px;height:1.4px;background:#efc4bc;"></div>
<div style="position:absolute;left:999px;top:643.44px;width:225px;height:1.4px;background:#efc4bc;"></div>
<div style="position:absolute;left:999px;top:666.8600000000001px;width:225px;height:1.4px;background:#efc4bc;"></div>
<svg style="position:absolute;left:34px;top:252.3px" width="11" height="11" viewBox="0 0 11 11"><circle cx="5.5" cy="5.5" r="4.6" fill="none" stroke="#cfcfcf" stroke-width="1.1"/><circle cx="5.5" cy="5.5" r="2.7" fill="#fff"/></svg>
<div class="t" style="left:49.00px;top:253.00px;font-size:12.2px;line-height:12.2px;color:#ebf1de;transform:scaleX(0.8836);transform-origin:0 0;-webkit-text-stroke:0.15px #ebf1de;">SETUP</div>
<svg style="position:absolute;left:270px;top:252.3px" width="11" height="11" viewBox="0 0 11 11"><circle cx="5.5" cy="5.5" r="4.6" fill="none" stroke="#cfcfcf" stroke-width="1.1"/><circle cx="5.5" cy="5.5" r="2.7" fill="#fff"/></svg>
<div class="t" style="left:285.00px;top:253.00px;font-size:12.2px;line-height:12.2px;color:#ebf1de;transform:scaleX(0.9204);transform-origin:0 0;-webkit-text-stroke:0.15px #ebf1de;">USAHA JASA</div>
<svg style="position:absolute;left:470px;top:252.3px" width="11" height="11" viewBox="0 0 11 11"><circle cx="5.5" cy="5.5" r="4.6" fill="none" stroke="#cfcfcf" stroke-width="1.1"/><circle cx="5.5" cy="5.5" r="2.7" fill="#fff"/></svg>
<div class="t" style="left:485.00px;top:253.00px;font-size:12.2px;line-height:12.2px;color:#ebf1de;transform:scaleX(0.9749);transform-origin:0 0;-webkit-text-stroke:0.15px #ebf1de;">USAHA SIMPAN PINJAM</div>
<svg style="position:absolute;left:770px;top:252.3px" width="11" height="11" viewBox="0 0 11 11"><circle cx="5.5" cy="5.5" r="4.6" fill="none" stroke="#cfcfcf" stroke-width="1.1"/><circle cx="5.5" cy="5.5" r="2.7" fill="#fff"/></svg>
<div class="t" style="left:785.00px;top:253.00px;font-size:12.2px;line-height:12.2px;color:#ebf1de;transform:scaleX(0.9712);transform-origin:0 0;-webkit-text-stroke:0.15px #ebf1de;">TRANSAKSI UMUM</div>
<svg style="position:absolute;left:1002px;top:252.3px" width="11" height="11" viewBox="0 0 11 11"><circle cx="5.5" cy="5.5" r="4.6" fill="none" stroke="#cfcfcf" stroke-width="1.1"/><circle cx="5.5" cy="5.5" r="2.7" fill="#fff"/></svg>
<div class="t" style="left:1017.00px;top:253.00px;font-size:12.2px;line-height:12.2px;color:#ebf1de;transform:scaleX(0.9554);transform-origin:0 0;-webkit-text-stroke:0.15px #ebf1de;">LAPORAN KEUANGAN BULANAN</div>
<div class="t" style="left:51.00px;top:276.00px;font-size:12.2px;line-height:12.2px;color:#ebf1de;transform:scaleX(0.9768);transform-origin:0 0;-webkit-text-stroke:0.15px #ebf1de;">DATA USAHA</div>
<div class="t" style="left:287.00px;top:276.00px;font-size:12.2px;line-height:12.2px;color:#ebf1de;transform:scaleX(0.9228);transform-origin:0 0;-webkit-text-stroke:0.15px #ebf1de;">DAFTAR PRODUK JASA</div>
<div class="t" style="left:487.00px;top:276.00px;font-size:12.2px;line-height:12.2px;color:#ebf1de;transform:scaleX(0.9574);transform-origin:0 0;-webkit-text-stroke:0.15px #ebf1de;">DAFTAR PINJAMAN ANGSURAN RUTIN</div>
<div class="t" style="left:787.00px;top:276.00px;font-size:12.2px;line-height:12.2px;color:#ebf1de;transform:scaleX(0.9615);transform-origin:0 0;-webkit-text-stroke:0.15px #ebf1de;">PENERIMAAN LAIN</div>
<div class="t" style="left:1019.00px;top:276.00px;font-size:12.2px;line-height:12.2px;color:#ebf1de;transform:scaleX(0.9727);transform-origin:0 0;-webkit-text-stroke:0.15px #ebf1de;">HASIL USAHA | BULANAN</div>
<div class="t" style="left:51.00px;top:299.00px;font-size:12.2px;line-height:12.2px;color:#ebf1de;transform:scaleX(0.9583);transform-origin:0 0;-webkit-text-stroke:0.15px #ebf1de;">DAFTAR ANGGOTA</div>
<div class="t" style="left:287.00px;top:299.00px;font-size:12.2px;line-height:12.2px;color:#ebf1de;transform:scaleX(0.9166);transform-origin:0 0;-webkit-text-stroke:0.15px #ebf1de;">PENJUALAN JASA</div>
<div class="t" style="left:487.00px;top:299.00px;font-size:12.2px;line-height:12.2px;color:#ebf1de;transform:scaleX(0.9466);transform-origin:0 0;-webkit-text-stroke:0.15px #ebf1de;">DETIL ANGSURAN ANGGOTA</div>
<div class="t" style="left:787.00px;top:299.00px;font-size:12.2px;line-height:12.2px;color:#ebf1de;transform:scaleX(0.9373);transform-origin:0 0;-webkit-text-stroke:0.15px #ebf1de;">PENGELUARAN LAIN</div>
<div class="t" style="left:1019.00px;top:299.00px;font-size:12.2px;line-height:12.2px;color:#ebf1de;transform:scaleX(0.9752);transform-origin:0 0;-webkit-text-stroke:0.15px #ebf1de;">NERACA | BULANAN</div>
<div class="t" style="left:51.00px;top:323.00px;font-size:12.2px;line-height:12.2px;color:#ebf1de;transform:scaleX(0.9095);transform-origin:0 0;-webkit-text-stroke:0.15px #ebf1de;">DAFTAR SUPPLIER</div>
<div class="t" style="left:287.00px;top:323.00px;font-size:12.2px;line-height:12.2px;color:#ebf1de;transform:scaleX(0.9164);transform-origin:0 0;-webkit-text-stroke:0.15px #ebf1de;">PENGELUARAN JASA</div>
<div class="t" style="left:487.00px;top:323.00px;font-size:12.2px;line-height:12.2px;color:#ebf1de;transform:scaleX(0.9659);transform-origin:0 0;-webkit-text-stroke:0.15px #ebf1de;">DAFTAR PINJAMAN ANGSURAN | TDK RUTIN</div>
<div class="t" style="left:787.00px;top:323.00px;font-size:12.2px;line-height:12.2px;color:#ebf1de;transform:scaleX(0.9519);transform-origin:0 0;-webkit-text-stroke:0.15px #ebf1de;">MUTASI REKENING</div>
<div class="t" style="left:1019.00px;top:323.00px;font-size:12.2px;line-height:12.2px;color:#ebf1de;transform:scaleX(0.9618);transform-origin:0 0;-webkit-text-stroke:0.15px #ebf1de;">ARUS KAS | BULANAN</div>
<div class="t" style="left:51.00px;top:346.00px;font-size:12.2px;line-height:12.2px;color:#ebf1de;transform:scaleX(0.9394);transform-origin:0 0;-webkit-text-stroke:0.15px #ebf1de;">DAFTAR PELANGGAN</div>
<div class="t" style="left:287.00px;top:346.00px;font-size:12.2px;line-height:12.2px;color:#ebf1de;transform:scaleX(0.9089);transform-origin:0 0;-webkit-text-stroke:0.15px #ebf1de;">REKAP USAHA JASA</div>
<div class="t" style="left:487.00px;top:346.00px;font-size:12.2px;line-height:12.2px;color:#ebf1de;transform:scaleX(0.9582);transform-origin:0 0;-webkit-text-stroke:0.15px #ebf1de;">DETIL ANGSURAN ANGGOTA | TDK RUTIN</div>
<div class="t" style="left:787.00px;top:346.00px;font-size:12.2px;line-height:12.2px;color:#ebf1de;transform:scaleX(0.9831);transform-origin:0 0;-webkit-text-stroke:0.15px #ebf1de;">PEMBAYARAN DI MUKA</div>
<svg style="position:absolute;left:1002px;top:345.98px" width="11" height="11" viewBox="0 0 11 11"><circle cx="5.5" cy="5.5" r="4.6" fill="none" stroke="#cfcfcf" stroke-width="1.1"/><circle cx="5.5" cy="5.5" r="2.7" fill="#fff"/></svg>
<div class="t" style="left:1017.00px;top:346.00px;font-size:12.2px;line-height:12.2px;color:#ebf1de;transform:scaleX(0.9332);transform-origin:0 0;-webkit-text-stroke:0.15px #ebf1de;">LAPORAN KEUANGAN PERIODE</div>
<div class="t" style="left:51.00px;top:370.00px;font-size:12.2px;line-height:12.2px;color:#ebf1de;transform:scaleX(0.9556);transform-origin:0 0;-webkit-text-stroke:0.15px #ebf1de;">DAFTAR AKUN KEUANGAN</div>
<svg style="position:absolute;left:270px;top:369.40000000000003px" width="11" height="11" viewBox="0 0 11 11"><circle cx="5.5" cy="5.5" r="4.6" fill="none" stroke="#cfcfcf" stroke-width="1.1"/><circle cx="5.5" cy="5.5" r="2.7" fill="#fff"/></svg>
<div class="t" style="left:285.00px;top:370.00px;font-size:12.2px;line-height:12.2px;color:#ebf1de;transform:scaleX(0.9569);transform-origin:0 0;-webkit-text-stroke:0.15px #ebf1de;">USAHA DAGANG</div>
<svg style="position:absolute;left:470px;top:369.40000000000003px" width="11" height="11" viewBox="0 0 11 11"><circle cx="5.5" cy="5.5" r="4.6" fill="none" stroke="#cfcfcf" stroke-width="1.1"/><circle cx="5.5" cy="5.5" r="2.7" fill="#fff"/></svg>
<div class="t" style="left:485.00px;top:370.00px;font-size:12.2px;line-height:12.2px;color:#ebf1de;transform:scaleX(0.9528);transform-origin:0 0;-webkit-text-stroke:0.15px #ebf1de;">TRANSAKSI SIMPAN PINJAM</div>
<div class="t" style="left:787.00px;top:370.00px;font-size:12.2px;line-height:12.2px;color:#ebf1de;transform:scaleX(0.9471);transform-origin:0 0;-webkit-text-stroke:0.15px #ebf1de;">PEMBELIAN | PENJUALAN ASET</div>
<div class="t" style="left:1019.00px;top:370.00px;font-size:12.2px;line-height:12.2px;color:#ebf1de;transform:scaleX(0.9346);transform-origin:0 0;-webkit-text-stroke:0.15px #ebf1de;">HASIL USAHA</div>
<div class="t" style="left:51.00px;top:393.00px;font-size:12.2px;line-height:12.2px;color:#ebf1de;transform:scaleX(0.9495);transform-origin:0 0;-webkit-text-stroke:0.15px #ebf1de;">DAFTAR ASET | INVENTARIS</div>
<div class="t" style="left:287.00px;top:393.00px;font-size:12.2px;line-height:12.2px;color:#ebf1de;transform:scaleX(0.9450);transform-origin:0 0;-webkit-text-stroke:0.15px #ebf1de;">DAFTAR PRODUK DAGANG</div>
<div class="t" style="left:487.00px;top:393.00px;font-size:12.2px;line-height:12.2px;color:#ebf1de;transform:scaleX(0.9511);transform-origin:0 0;-webkit-text-stroke:0.15px #ebf1de;">PENGELUARAN PINJAMAN</div>
<svg style="position:absolute;left:770px;top:392.82000000000005px" width="11" height="11" viewBox="0 0 11 11"><circle cx="5.5" cy="5.5" r="4.6" fill="none" stroke="#cfcfcf" stroke-width="1.1"/><circle cx="5.5" cy="5.5" r="2.7" fill="#fff"/></svg>
<div class="t" style="left:785.00px;top:393.00px;font-size:12.2px;line-height:12.2px;color:#ebf1de;transform:scaleX(0.9372);transform-origin:0 0;-webkit-text-stroke:0.15px #ebf1de;">TRANSAKSI LAIN-LAIN</div>
<div class="t" style="left:1019.00px;top:393.00px;font-size:12.2px;line-height:12.2px;color:#ebf1de;transform:scaleX(0.9178);transform-origin:0 0;-webkit-text-stroke:0.15px #ebf1de;">NERACA</div>
<div class="t" style="left:51.00px;top:417.00px;font-size:12.2px;line-height:12.2px;color:#ebf1de;transform:scaleX(0.9721);transform-origin:0 0;-webkit-text-stroke:0.15px #ebf1de;">DAFTAR PEMBAYARAN DI MUKA</div>
<div class="t" style="left:287.00px;top:417.00px;font-size:12.2px;line-height:12.2px;color:#ebf1de;transform:scaleX(0.9453);transform-origin:0 0;-webkit-text-stroke:0.15px #ebf1de;">PENJUALAN DAGANG</div>
<div class="t" style="left:487.00px;top:417.00px;font-size:12.2px;line-height:12.2px;color:#ebf1de;transform:scaleX(0.9582);transform-origin:0 0;-webkit-text-stroke:0.15px #ebf1de;">PEMBAYARAN ANGSURAN RUTIN</div>
<div class="t" style="left:787.00px;top:417.00px;font-size:12.2px;line-height:12.2px;color:#ebf1de;transform:scaleX(0.9578);transform-origin:0 0;-webkit-text-stroke:0.15px #ebf1de;">PENGAMBILAN SHU</div>
<div class="t" style="left:1019.00px;top:417.00px;font-size:12.2px;line-height:12.2px;color:#ebf1de;transform:scaleX(0.8999);transform-origin:0 0;-webkit-text-stroke:0.15px #ebf1de;">ARUS KAS</div>
<div class="t" style="left:51.00px;top:440.00px;font-size:12.2px;line-height:12.2px;color:#ebf1de;transform:scaleX(0.9376);transform-origin:0 0;-webkit-text-stroke:0.15px #ebf1de;">DAFTAR SHU</div>
<div class="t" style="left:287.00px;top:440.00px;font-size:12.2px;line-height:12.2px;color:#ebf1de;transform:scaleX(0.9555);transform-origin:0 0;-webkit-text-stroke:0.15px #ebf1de;">PEMBELIAN DAGANG</div>
<div class="t" style="left:487.00px;top:440.00px;font-size:12.2px;line-height:12.2px;color:#ebf1de;transform:scaleX(0.9558);transform-origin:0 0;-webkit-text-stroke:0.15px #ebf1de;">PEMBAYARAN ANGSURAN TIDAK RUTIN</div>
<svg style="position:absolute;left:770px;top:439.66px" width="11" height="11" viewBox="0 0 11 11"><circle cx="5.5" cy="5.5" r="4.6" fill="none" stroke="#cfcfcf" stroke-width="1.1"/><circle cx="5.5" cy="5.5" r="2.7" fill="#fff"/></svg>
<div class="t" style="left:785.00px;top:440.00px;font-size:12.2px;line-height:12.2px;color:#ebf1de;transform:scaleX(0.9541);transform-origin:0 0;-webkit-text-stroke:0.15px #ebf1de;">LAPORAN ANGGOTA</div>
<div class="t" style="left:1019.00px;top:440.00px;font-size:12.2px;line-height:12.2px;color:#ebf1de;transform:scaleX(0.9258);transform-origin:0 0;-webkit-text-stroke:0.15px #ebf1de;">EKUITAS</div>
<svg style="position:absolute;left:34px;top:463.08000000000004px" width="11" height="11" viewBox="0 0 11 11"><circle cx="5.5" cy="5.5" r="4.6" fill="none" stroke="#cfcfcf" stroke-width="1.1"/><circle cx="5.5" cy="5.5" r="2.7" fill="#fff"/></svg>
<div class="t" style="left:49.00px;top:463.00px;font-size:12.2px;line-height:12.2px;color:#ebf1de;transform:scaleX(0.9741);transform-origin:0 0;-webkit-text-stroke:0.15px #ebf1de;">DAFTAR SIMPANAN</div>
<div class="t" style="left:287.00px;top:463.00px;font-size:12.2px;line-height:12.2px;color:#ebf1de;transform:scaleX(0.9419);transform-origin:0 0;-webkit-text-stroke:0.15px #ebf1de;">PENERIMAAN TITIP JUAL</div>
<div class="t" style="left:487.00px;top:463.00px;font-size:12.2px;line-height:12.2px;color:#ebf1de;transform:scaleX(0.9230);transform-origin:0 0;-webkit-text-stroke:0.15px #ebf1de;">PELUNASAN DIPERCEPAT</div>
<div class="t" style="left:787.00px;top:463.00px;font-size:12.2px;line-height:12.2px;color:#ebf1de;transform:scaleX(0.9658);transform-origin:0 0;-webkit-text-stroke:0.15px #ebf1de;">BUKU ANGGOTA</div>
<div class="t" style="left:1019.00px;top:463.00px;font-size:12.2px;line-height:12.2px;color:#ebf1de;transform:scaleX(0.9363);transform-origin:0 0;-webkit-text-stroke:0.15px #ebf1de;">ASET &amp; PENYUSUTAN</div>
<div class="t" style="left:51.00px;top:487.00px;font-size:12.2px;line-height:12.2px;color:#ebf1de;transform:scaleX(0.9584);transform-origin:0 0;-webkit-text-stroke:0.15px #ebf1de;">DAFTAR SIMPANAN POKOK</div>
<svg style="position:absolute;left:270px;top:486.5px" width="11" height="11" viewBox="0 0 11 11"><circle cx="5.5" cy="5.5" r="4.6" fill="none" stroke="#cfcfcf" stroke-width="1.1"/><circle cx="5.5" cy="5.5" r="2.7" fill="#fff"/></svg>
<div class="t" style="left:285.00px;top:487.00px;font-size:12.2px;line-height:12.2px;color:#ebf1de;transform:scaleX(0.9291);transform-origin:0 0;-webkit-text-stroke:0.15px #ebf1de;">USAHA PRODUKSI</div>
<div class="t" style="left:487.00px;top:487.00px;font-size:12.2px;line-height:12.2px;color:#ebf1de;transform:scaleX(0.9686);transform-origin:0 0;-webkit-text-stroke:0.15px #ebf1de;">PINJAMAN JATUH TEMPO</div>
<div class="t" style="left:787.00px;top:487.00px;font-size:12.2px;line-height:12.2px;color:#ebf1de;transform:scaleX(0.9242);transform-origin:0 0;-webkit-text-stroke:0.15px #ebf1de;">REKAP ANGSURAN</div>
<div class="t" style="left:1019.00px;top:487.00px;font-size:12.2px;line-height:12.2px;color:#ebf1de;transform:scaleX(0.9380);transform-origin:0 0;-webkit-text-stroke:0.15px #ebf1de;">GRAFIK KEUANGAN</div>
<div class="t" style="left:51.00px;top:510.00px;font-size:12.2px;line-height:12.2px;color:#ebf1de;transform:scaleX(0.9725);transform-origin:0 0;-webkit-text-stroke:0.15px #ebf1de;">DAFTAR SIMPANAN WAJIB</div>
<div class="t" style="left:287.00px;top:510.00px;font-size:12.2px;line-height:12.2px;color:#ebf1de;transform:scaleX(0.9279);transform-origin:0 0;-webkit-text-stroke:0.15px #ebf1de;">DAFTAR PRODUK PRODUKSI</div>
<svg style="position:absolute;left:470px;top:509.92px" width="11" height="11" viewBox="0 0 11 11"><circle cx="5.5" cy="5.5" r="4.6" fill="none" stroke="#cfcfcf" stroke-width="1.1"/><circle cx="5.5" cy="5.5" r="2.7" fill="#fff"/></svg>
<div class="t" style="left:485.00px;top:510.00px;font-size:12.2px;line-height:12.2px;color:#ebf1de;transform:scaleX(0.9764);transform-origin:0 0;-webkit-text-stroke:0.15px #ebf1de;">TANDA TERIMA</div>
<div class="t" style="left:787.00px;top:510.00px;font-size:12.2px;line-height:12.2px;color:#ebf1de;transform:scaleX(0.9577);transform-origin:0 0;-webkit-text-stroke:0.15px #ebf1de;">REKAP SIMPANAN WAJIB</div>
<div class="t" style="left:1019.00px;top:510.00px;font-size:12.2px;line-height:12.2px;color:#ebf1de;transform:scaleX(0.9201);transform-origin:0 0;-webkit-text-stroke:0.15px #ebf1de;">LAPORAN KINERJA</div>
<div class="t" style="left:51.00px;top:534.00px;font-size:12.2px;line-height:12.2px;color:#ebf1de;transform:scaleX(0.9469);transform-origin:0 0;-webkit-text-stroke:0.15px #ebf1de;">DAFTAR SIMPANAN SUKARELA</div>
<div class="t" style="left:287.00px;top:534.00px;font-size:12.2px;line-height:12.2px;color:#ebf1de;transform:scaleX(0.9335);transform-origin:0 0;-webkit-text-stroke:0.15px #ebf1de;">PEMBELIAN PRODUKSI</div>
<div class="t" style="left:487.00px;top:534.00px;font-size:12.2px;line-height:12.2px;color:#ebf1de;transform:scaleX(0.9717);transform-origin:0 0;-webkit-text-stroke:0.15px #ebf1de;">DAFTAR NOMOR TANDA TERIMA</div>
<div class="t" style="left:787.00px;top:534.00px;font-size:12.2px;line-height:12.2px;color:#ebf1de;transform:scaleX(0.9335);transform-origin:0 0;-webkit-text-stroke:0.15px #ebf1de;">REKAP SIMPANAN SUKARELA</div>
<svg style="position:absolute;left:1002px;top:533.34px" width="11" height="11" viewBox="0 0 11 11"><circle cx="5.5" cy="5.5" r="4.6" fill="none" stroke="#cfcfcf" stroke-width="1.1"/><circle cx="5.5" cy="5.5" r="2.7" fill="#fff"/></svg>
<div class="t" style="left:1017.00px;top:534.00px;font-size:12.2px;line-height:12.2px;color:#ebf1de;transform:scaleX(0.9342);transform-origin:0 0;-webkit-text-stroke:0.15px #ebf1de;">LAPORAN SHU</div>
<div class="t" style="left:51.00px;top:557.00px;font-size:12.2px;line-height:12.2px;color:#ebf1de;transform:scaleX(0.9732);transform-origin:0 0;-webkit-text-stroke:0.15px #ebf1de;">DAFTAR SIMPANAN LAIN-LAIN</div>
<svg style="position:absolute;left:270px;top:556.76px" width="11" height="11" viewBox="0 0 11 11"><circle cx="5.5" cy="5.5" r="4.6" fill="none" stroke="#cfcfcf" stroke-width="1.1"/><circle cx="5.5" cy="5.5" r="2.7" fill="#fff"/></svg>
<div class="t" style="left:285.00px;top:557.00px;font-size:12.2px;line-height:12.2px;color:#ebf1de;transform:scaleX(0.9220);transform-origin:0 0;-webkit-text-stroke:0.15px #ebf1de;">LAPORAN PERSEDIAAN</div>
<div class="t" style="left:487.00px;top:557.00px;font-size:12.2px;line-height:12.2px;color:#ebf1de;transform:scaleX(0.9257);transform-origin:0 0;-webkit-text-stroke:0.15px #ebf1de;">CETAK INVOICE</div>
<div class="t" style="left:787.00px;top:557.00px;font-size:12.2px;line-height:12.2px;color:#ebf1de;transform:scaleX(0.9603);transform-origin:0 0;-webkit-text-stroke:0.15px #ebf1de;">REKAP SIMPANAN LAIN-LAIN</div>
<div class="t" style="left:1019.00px;top:557.00px;font-size:12.2px;line-height:12.2px;color:#ebf1de;transform:scaleX(0.9234);transform-origin:0 0;-webkit-text-stroke:0.15px #ebf1de;">ALOKASI SHU</div>
<svg style="position:absolute;left:34px;top:580.1800000000001px" width="11" height="11" viewBox="0 0 11 11"><circle cx="5.5" cy="5.5" r="4.6" fill="none" stroke="#cfcfcf" stroke-width="1.1"/><circle cx="5.5" cy="5.5" r="2.7" fill="#fff"/></svg>
<div class="t" style="left:49.00px;top:580.00px;font-size:12.2px;line-height:12.2px;color:#ebf1de;transform:scaleX(0.9502);transform-origin:0 0;-webkit-text-stroke:0.15px #ebf1de;">TRANSAKSI SIMPANAN</div>
<div class="t" style="left:287.00px;top:580.00px;font-size:12.2px;line-height:12.2px;color:#ebf1de;transform:scaleX(0.9319);transform-origin:0 0;-webkit-text-stroke:0.15px #ebf1de;">STOK SEMUA PRODUK</div>
<div class="t" style="left:487.00px;top:580.00px;font-size:12.2px;line-height:12.2px;color:#ebf1de;transform:scaleX(0.9382);transform-origin:0 0;-webkit-text-stroke:0.15px #ebf1de;">CETAK KUITANSI</div>
<div class="t" style="left:787.00px;top:580.00px;font-size:12.2px;line-height:12.2px;color:#ebf1de;transform:scaleX(0.9125);transform-origin:0 0;-webkit-text-stroke:0.15px #ebf1de;">REKAP PARTISIPASI</div>
<div class="t" style="left:1019.00px;top:580.00px;font-size:12.2px;line-height:12.2px;color:#ebf1de;transform:scaleX(0.9346);transform-origin:0 0;-webkit-text-stroke:0.15px #ebf1de;">REKAP SHU ANGGOTA</div>
<div class="t" style="left:51.00px;top:604.00px;font-size:12.2px;line-height:12.2px;color:#ebf1de;transform:scaleX(0.9657);transform-origin:0 0;-webkit-text-stroke:0.15px #ebf1de;">SIMPANAN POKOK</div>
<div class="t" style="left:287.00px;top:604.00px;font-size:12.2px;line-height:12.2px;color:#ebf1de;transform:scaleX(0.9145);transform-origin:0 0;-webkit-text-stroke:0.15px #ebf1de;">STOK PRODUK TERTENTU</div>
<div class="t" style="left:487.00px;top:604.00px;font-size:12.2px;line-height:12.2px;color:#ebf1de;transform:scaleX(0.9007);transform-origin:0 0;-webkit-text-stroke:0.15px #ebf1de;">CETAK PURCHASE ORDER</div>
<div class="t" style="left:787.00px;top:604.00px;font-size:12.2px;line-height:12.2px;color:#ebf1de;transform:scaleX(0.9489);transform-origin:0 0;-webkit-text-stroke:0.15px #ebf1de;">REKAP PIUTANG USAHA ANGGOTA</div>
<div class="t" style="left:1019.00px;top:604.00px;font-size:12.2px;line-height:12.2px;color:#ebf1de;transform:scaleX(0.9489);transform-origin:0 0;-webkit-text-stroke:0.15px #ebf1de;">LAPORAN SHU ANGGOTA</div>
<div class="t" style="left:51.00px;top:627.00px;font-size:12.2px;line-height:12.2px;color:#ebf1de;transform:scaleX(0.9873);transform-origin:0 0;-webkit-text-stroke:0.15px #ebf1de;">SIMPANAN WAJIB</div>
<div class="t" style="left:287.00px;top:627.00px;font-size:12.2px;line-height:12.2px;color:#ebf1de;transform:scaleX(0.8818);transform-origin:0 0;-webkit-text-stroke:0.15px #ebf1de;">LISENSI</div>
<div class="t" style="left:787.00px;top:627.00px;font-size:12.2px;line-height:12.2px;color:#ebf1de;transform:scaleX(0.9542);transform-origin:0 0;-webkit-text-stroke:0.15px #ebf1de;">REKAP PIUTANG USAHA NON ANGGOTA</div>
<div class="t" style="left:51.00px;top:651.00px;font-size:12.2px;line-height:12.2px;color:#ebf1de;transform:scaleX(0.9721);transform-origin:0 0;-webkit-text-stroke:0.15px #ebf1de;">SIMPANAN SUKARELA | LAIN-LAIN</div>
<div class="t" style="left:287.00px;top:651.00px;font-size:12.2px;line-height:12.2px;color:#ebf1de;transform:scaleX(0.9608);transform-origin:0 0;-webkit-text-stroke:0.15px #ebf1de;">ABOUT</div>
<div class="t" style="left:787.00px;top:651.00px;font-size:12.2px;line-height:12.2px;color:#ebf1de;transform:scaleX(0.9413);transform-origin:0 0;-webkit-text-stroke:0.15px #ebf1de;">REKAP UTANG USAHA</div>
<div class="t" style="left:1019.00px;top:651.00px;font-size:12.2px;line-height:12.2px;color:#ebf1de;transform:scaleX(1.0499);transform-origin:0 0;-webkit-text-stroke:0.15px #ebf1de;">© 2019 - 2024 | Akoontan.com</div>
<div class="t" style="left:524.40px;top:626.00px;font-size:16.4px;line-height:16.4px;color:#ffffff;font-weight:bold;transform:scaleX(0.8824);transform-origin:0 0;">KLIK DI SINI UNTUK CARA</div>
<div class="t" style="left:562.80px;top:649.00px;font-size:16.4px;line-height:16.4px;color:#ffffff;font-weight:bold;transform:scaleX(0.9241);transform-origin:0 0;">PENGGUNAAN</div>
<div style="position:absolute;left:0px;top:247.3px;width:23px;height:1px;background:#c8c8c8;"></div>
<div class="t" style="left:8.66px;top:233.00px;font-size:12px;line-height:12px;color:#1f5c3a;">2</div>
<div style="position:absolute;left:0px;top:269.52000000000004px;width:23px;height:1px;background:#c8c8c8;"></div>
<div class="t" style="left:8.66px;top:255.00px;font-size:12px;line-height:12px;color:#333333;">3</div>
<div style="position:absolute;left:0px;top:292.94px;width:23px;height:1px;background:#c8c8c8;"></div>
<div class="t" style="left:8.66px;top:278.00px;font-size:12px;line-height:12px;color:#333333;">4</div>
<div style="position:absolute;left:0px;top:316.36px;width:23px;height:1px;background:#c8c8c8;"></div>
<div class="t" style="left:8.66px;top:302.00px;font-size:12px;line-height:12px;color:#333333;">5</div>
<div style="position:absolute;left:0px;top:339.78000000000003px;width:23px;height:1px;background:#c8c8c8;"></div>
<div class="t" style="left:8.66px;top:325.00px;font-size:12px;line-height:12px;color:#333333;">6</div>
<div style="position:absolute;left:0px;top:363.20000000000005px;width:23px;height:1px;background:#c8c8c8;"></div>
<div class="t" style="left:8.66px;top:349.00px;font-size:12px;line-height:12px;color:#333333;">7</div>
<div style="position:absolute;left:0px;top:386.62000000000006px;width:23px;height:1px;background:#c8c8c8;"></div>
<div class="t" style="left:8.66px;top:372.00px;font-size:12px;line-height:12px;color:#333333;">8</div>
<div style="position:absolute;left:0px;top:410.04px;width:23px;height:1px;background:#c8c8c8;"></div>
<div class="t" style="left:8.66px;top:395.00px;font-size:12px;line-height:12px;color:#333333;">9</div>
<div style="position:absolute;left:0px;top:433.46000000000004px;width:23px;height:1px;background:#c8c8c8;"></div>
<div class="t" style="left:5.33px;top:419.00px;font-size:12px;line-height:12px;color:#333333;">10</div>
<div style="position:absolute;left:0px;top:456.88000000000005px;width:23px;height:1px;background:#c8c8c8;"></div>
<div class="t" style="left:5.77px;top:442.00px;font-size:12px;line-height:12px;color:#333333;">11</div>
<div style="position:absolute;left:0px;top:480.3px;width:23px;height:1px;background:#c8c8c8;"></div>
<div class="t" style="left:5.33px;top:466.00px;font-size:12px;line-height:12px;color:#333333;">12</div>
<div style="position:absolute;left:0px;top:503.72px;width:23px;height:1px;background:#c8c8c8;"></div>
<div class="t" style="left:5.33px;top:489.00px;font-size:12px;line-height:12px;color:#333333;">13</div>
<div style="position:absolute;left:0px;top:527.14px;width:23px;height:1px;background:#c8c8c8;"></div>
<div class="t" style="left:5.33px;top:513.00px;font-size:12px;line-height:12px;color:#333333;">14</div>
<div style="position:absolute;left:0px;top:550.56px;width:23px;height:1px;background:#c8c8c8;"></div>
<div class="t" style="left:5.33px;top:536.00px;font-size:12px;line-height:12px;color:#333333;">15</div>
<div style="position:absolute;left:0px;top:573.98px;width:23px;height:1px;background:#c8c8c8;"></div>
<div class="t" style="left:5.33px;top:559.00px;font-size:12px;line-height:12px;color:#333333;">16</div>
<div style="position:absolute;left:0px;top:597.4px;width:23px;height:1px;background:#c8c8c8;"></div>
<div class="t" style="left:5.33px;top:583.00px;font-size:12px;line-height:12px;color:#333333;">17</div>
<div style="position:absolute;left:0px;top:620.8199999999999px;width:23px;height:1px;background:#c8c8c8;"></div>
<div class="t" style="left:5.33px;top:606.00px;font-size:12px;line-height:12px;color:#333333;">18</div>
<div style="position:absolute;left:0px;top:644.24px;width:23px;height:1px;background:#c8c8c8;"></div>
<div class="t" style="left:5.33px;top:630.00px;font-size:12px;line-height:12px;color:#333333;">19</div>
<div style="position:absolute;left:0px;top:667.6600000000001px;width:23px;height:1px;background:#c8c8c8;"></div>
<div class="t" style="left:5.33px;top:653.00px;font-size:12px;line-height:12px;color:#333333;">20</div>
<div style="position:absolute;left:22.5px;top:207px;width:1.5px;height:39.5px;background:#217346;"></div>
<div style="position:absolute;left:30px;top:207px;width:967px;height:37px;border:2px solid #217346;box-shadow:inset 0 0 0 1px #ffffff;"></div>
<div style="position:absolute;left:996px;top:244px;width:5.5px;height:5.5px;background:#217346;box-shadow:0 0 0 1px #fff;"></div>
<div style="position:absolute;left:22.3px;top:207px;width:1.8px;height:39px;background:#217346;"></div>
<div style="position:absolute;left:1260px;top:190px;width:20px;height:482px;background:#e9e9e9;"></div>
<div style="position:absolute;left:1259px;top:207px;width:1.6px;height:465px;background:#c0c0c0;"></div>
<div style="position:absolute;left:1262.5px;top:207px;width:15px;height:452px;background:#f2f2f2;"></div>
<div style="position:absolute;left:1263px;top:192px;width:14px;height:14px;background:#ffffff;box-shadow:inset 0 0 0 1px #a6a6a6;"></div>
<svg style="position:absolute;left:1266.5px;top:196.5px" width="7" height="5" viewBox="0 0 7 5"><path d="M0,4 H7 L3.5,0.3 Z" fill="#222"/></svg>
<div style="position:absolute;left:1263px;top:220.5px;width:14px;height:281.5px;background:#ffffff;box-shadow:inset 0 0 0 1px #a6a6a6;"></div>
<div style="position:absolute;left:1263px;top:659px;width:14px;height:14px;background:#ffffff;box-shadow:inset 0 0 0 1px #a6a6a6;"></div>
<svg style="position:absolute;left:1266.5px;top:664px" width="7" height="5" viewBox="0 0 7 5"><path d="M0,0.5 H7 L3.5,4.2 Z" fill="#222"/></svg>
<div style="position:absolute;left:0px;top:672px;width:1280px;height:26px;background:#e6e6e6;"></div>
<svg style="position:absolute;left:25px;top:681px" width="5" height="7" viewBox="0 0 5 7"><path d="M4.5,0 V7 L0.5,3.5 Z" fill="#b8b8b8"/></svg>
<svg style="position:absolute;left:51.5px;top:681px" width="5" height="7" viewBox="0 0 5 7"><path d="M0.5,0 V7 L4.5,3.5 Z" fill="#217346"/></svg>
<div style="position:absolute;left:94.5px;top:672px;width:55.5px;height:23px;background:#ffffff;box-shadow:inset 1px 0 0 #d0d0d0, inset -1px 0 0 #d0d0d0;"></div>
<div style="position:absolute;left:94.5px;top:693.3px;width:55.5px;height:2px;background:#217346;"></div>
<div class="t" style="left:105.60px;top:679.00px;font-size:12px;line-height:12px;color:#217346;font-weight:bold;transform:scaleX(1.0214);transform-origin:0 0;">Menu</div>
<div class="t" style="left:161.25px;top:679.00px;font-size:12px;line-height:12px;color:#444444;transform:scaleX(1.0192);transform-origin:0 0;">Data Koperasi</div>
<div style="position:absolute;left:252px;top:677px;width:1px;height:16px;background:#b5b5b5;"></div>
<div class="t" style="left:266.30px;top:679.00px;font-size:12px;line-height:12px;color:#444444;transform:scaleX(1.0369);transform-origin:0 0;">Daftar Anggota</div>
<div style="position:absolute;left:365px;top:677px;width:1px;height:16px;background:#b5b5b5;"></div>
<div class="t" style="left:377.50px;top:679.00px;font-size:12px;line-height:12px;color:#444444;transform:scaleX(0.9862);transform-origin:0 0;">Daftar SHU</div>
<div style="position:absolute;left:451.7px;top:677px;width:1px;height:16px;background:#b5b5b5;"></div>
<div class="t" style="left:468.00px;top:679.00px;font-size:12px;line-height:12px;color:#444444;">Daftar | Bayar Simpanan Pokok</div>
<div style="position:absolute;left:653.4px;top:677px;width:1px;height:16px;background:#b5b5b5;"></div>
<div class="t" style="left:670.00px;top:679.00px;font-size:12px;line-height:12px;color:#444444;transform:scaleX(1.0167);transform-origin:0 0;">Daftar Simpanan Wajib</div>
<div style="position:absolute;left:811.5px;top:677px;width:1px;height:16px;background:#b5b5b5;"></div>
<div class="t" style="left:827.50px;top:679.00px;font-size:12px;line-height:12px;color:#444444;">Daftar Simpanan</div>
<div style="position:absolute;left:929.5px;top:686.5px;width:2px;height:2px;background:#217346;"></div>
<div style="position:absolute;left:933.1px;top:686.5px;width:2px;height:2px;background:#217346;"></div>
<div style="position:absolute;left:936.7px;top:686.5px;width:2px;height:2px;background:#217346;"></div>
<svg style="position:absolute;left:951px;top:676px" width="16" height="16" viewBox="0 0 16 16"><circle cx="8" cy="8" r="6.8" fill="none" stroke="#666" stroke-width="1.2"/><path d="M8,4 V12 M4,8 H12" stroke="#666" stroke-width="1.3"/></svg>
<div style="position:absolute;left:986.5px;top:681px;width:1.3px;height:1.3px;background:#b0b0b0;"></div>
<div style="position:absolute;left:986.5px;top:684.5px;width:1.3px;height:1.3px;background:#b0b0b0;"></div>
<div style="position:absolute;left:986.5px;top:688px;width:1.3px;height:1.3px;background:#b0b0b0;"></div>
<div style="position:absolute;left:1002px;top:679px;width:14px;height:13.5px;background:#ffffff;box-shadow:inset 0 0 0 1px #a6a6a6;"></div>
<svg style="position:absolute;left:1006.5px;top:682.5px" width="5" height="7" viewBox="0 0 5 7"><path d="M4.2,0 V7 L0.5,3.5 Z" fill="#222"/></svg>
<div style="position:absolute;left:1015px;top:679px;width:172.5px;height:13.5px;background:#ffffff;box-shadow:inset 0 0 0 1px #a6a6a6;"></div>
<div style="position:absolute;left:1246px;top:679px;width:14px;height:13.5px;background:#ffffff;box-shadow:inset 0 0 0 1px #a6a6a6;"></div>
<svg style="position:absolute;left:1250.5px;top:682.5px" width="5" height="7" viewBox="0 0 5 7"><path d="M0.8,0 V7 L4.5,3.5 Z" fill="#222"/></svg>
<div style="position:absolute;left:0px;top:698px;width:1280px;height:22px;background:#f3f3f3;"></div>
<div style="position:absolute;left:0px;top:697.5px;width:1280px;height:1px;background:#d6d6d6;"></div>
<div class="t" style="left:10.60px;top:703.00px;font-size:12px;line-height:12px;color:#444444;transform:scaleX(0.8187);transform-origin:0 0;">Ready</div>
<svg style="position:absolute;left:56px;top:701px" width="17" height="16" viewBox="0 0 17 16">
<path d="M6.5,2.5 A5.5,5.5 0 1,0 11.5,9" fill="none" stroke="#444" stroke-width="1.1" stroke-dasharray="2,1.2"/>
<path d="M6.5,0.5 V7 H9.5" fill="none" stroke="#444" stroke-width="1.2"/>
<path d="M9,9.5 L15,15.5 M15,9.5 L9,15.5" stroke="#333" stroke-width="1.5"/></svg>
<div class="t" style="left:74.50px;top:703.00px;font-size:12px;line-height:12px;color:#333333;font-weight:bold;transform:scaleX(0.8194);transform-origin:0 0;">Accessibility: Investigate</div>
<div style="position:absolute;left:999px;top:698.7px;width:37px;height:18.8px;background:#c8c8c8;"></div>
<svg style="position:absolute;left:1010px;top:701.5px" width="16" height="15" viewBox="0 0 16 15"><rect x="0.5" y="0.5" width="14" height="13" fill="none" stroke="#555" stroke-width="1"/><path d="M5.2,0.5 V13.5 M9.8,0.5 V13.5 M0.5,4.8 H14.5 M0.5,9.2 H14.5" stroke="#555" stroke-width="1"/></svg>
<svg style="position:absolute;left:1046px;top:701.5px" width="16" height="15" viewBox="0 0 16 15"><rect x="1.5" y="0.5" width="12" height="13" fill="none" stroke="#555" stroke-width="1"/><rect x="4" y="3" width="7" height="8" fill="none" stroke="#555" stroke-width="1"/><path d="M5.5,5.5 H9.5 M5.5,8 H9.5" stroke="#555" stroke-width="0.8"/></svg>
<svg style="position:absolute;left:1086px;top:701.5px" width="16" height="15" viewBox="0 0 16 15"><rect x="1" y="1" width="13" height="12.5" fill="none" stroke="#555" stroke-width="1"/><path d="M5.5,1 V7.5 H10 V1" fill="none" stroke="#555" stroke-width="1"/></svg>
<div style="position:absolute;left:1116px;top:708.5px;width:9px;height:1.2px;background:#444;"></div>
<div style="position:absolute;left:1129px;top:708.5px;width:94px;height:1.2px;background:#777;"></div>
<div style="position:absolute;left:1172.5px;top:703px;width:5px;height:12px;background:#555;"></div>
<div style="position:absolute;left:1227px;top:708.5px;width:9px;height:1.2px;background:#444;"></div>
<div style="position:absolute;left:1230.9px;top:704.5px;width:1.2px;height:9px;background:#444;"></div>
<div class="t" style="left:1246.00px;top:704.00px;font-size:11px;line-height:11px;color:#444444;transform:scaleX(0.9242);transform-origin:0 0;">100%</div>
<div style="position:absolute;left:0;top:668px;width:23px;height:2.5px;overflow:hidden;"><div class="t" style="left:6px;top:-1px;font-size:12px;line-height:12px;color:#333">21</div></div>
</body></html>
